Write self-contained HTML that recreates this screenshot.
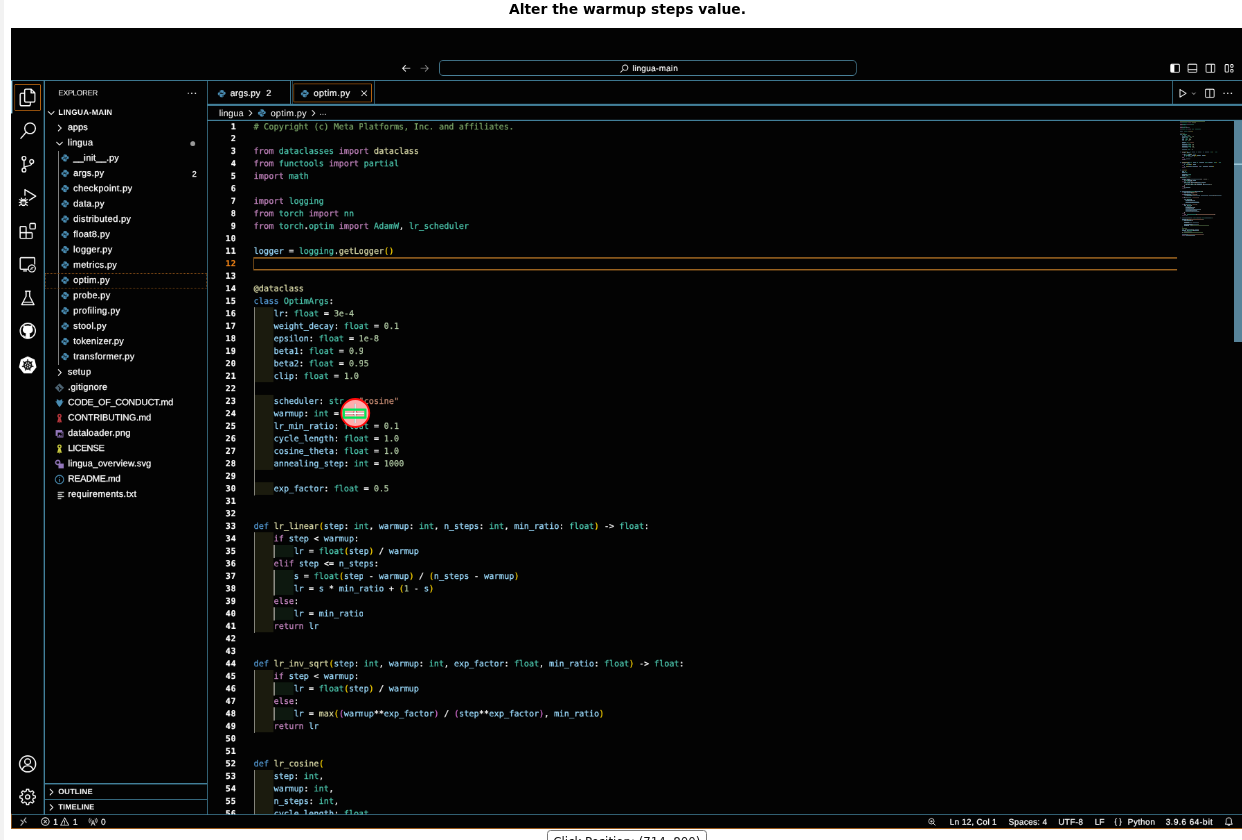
<!DOCTYPE html>
<html lang="en"><head><meta charset="utf-8"><title>optim.py — lingua-main</title>
<style>
html,body{margin:0;padding:0}
body{width:1242px;height:840px;overflow:hidden;background:#fff;position:relative;font-family:"Liberation Sans",sans-serif}
#strip{position:absolute;left:0;top:0;width:4px;height:840px;background:#f2f2f2}
#title{will-change:transform;position:absolute;left:12px;width:1231px;top:1px;text-align:center;font:bold 13.89px "DejaVu Sans",sans-serif;color:#000;line-height:17px;white-space:nowrap}
#clickpos{position:absolute;left:547.400px;top:830.400px;width:159.700px;height:20px;box-sizing:border-box;border:1px solid #7a7a7a;border-radius:3.500px;background:#fff;font:11.800px "DejaVu Sans",sans-serif;color:#111;text-align:center;line-height:22px;white-space:nowrap;will-change:transform}
#vs{position:absolute;left:11px;top:28px;width:1231px;height:801.300px;background:#030303;overflow:hidden}
#u{text-rendering:geometricPrecision;position:absolute;left:0;top:0;width:1778px;height:1158px;transform:scale(.6925,.6946);transform-origin:0 0;color:#fff;font-size:13px;will-change:transform}
#u div,#u span,#u i,#u svg{box-sizing:border-box}
#u i{display:block;position:absolute;font-style:normal}
.abs{position:absolute}
.hl{position:absolute;background:#427f99;height:1px}
.vl{position:absolute;background:#427f99;width:1px}
/* title bar */
#cc{position:absolute;left:618px;top:46.200px;width:603px;height:23px;border:1.200px solid #5493ae;border-radius:6px}
#cctext{position:absolute;left:897.200px;top:48.700px;height:18px;line-height:18px;font-size:12px;white-space:nowrap}
/* activity bar */
.ab-item{position:absolute;left:0;width:48px;height:48px}
.ab-item svg{position:absolute;left:10px;top:10px;color:#fff}
#ab-focus{position:absolute;left:5px;top:81px;width:38px;height:38px;border:1.300px solid #c26a12;border-radius:1px}
#ab-ind{position:absolute;left:0;top:76.300px;width:2.200px;height:47px;background:#a9dcf0}
/* sidebar */
#sbtitle{position:absolute;left:68.300px;top:85px;height:18px;line-height:18px;font-size:11px;white-space:nowrap}
.ph{position:absolute;left:49px;width:234px;height:22px;line-height:22px;font-size:11px;font-weight:bold;white-space:nowrap}
.ph .lbl{position:absolute;left:19.300px;top:.8px}
.row{position:absolute;left:0;width:283px;height:22px;line-height:22px;font-size:13px;white-space:nowrap}
.row .lbl{position:absolute;top:-.9px;-webkit-text-stroke:.3px #fff}
#selbox{position:absolute;left:48.500px;top:352.700px;width:234.500px;height:22px;border:1.100px dotted #8a5018}
.row svg{position:absolute}
.dot{right:17.500px;top:8.500px;width:7px;height:7px;border-radius:50%;background:#9a9a9a}
.bdg{position:absolute;right:15.200px;top:1px;font-size:11.500px;-webkit-text-stroke:.3px #fff}
.tw{color:#fff}
/* editor */
.tab{position:absolute;top:76.700px;height:33px;line-height:34px;font-size:13px;white-space:nowrap}
#bc{position:absolute;left:300.500px;top:111.700px;height:21px;line-height:21px;font-size:13px;white-space:nowrap}
#code{position:absolute;left:284px;top:133.100px;width:1494px;height:999.200px;overflow:hidden;font-family:"DejaVu Sans Mono","Liberation Mono",monospace;font-size:12px}
.ln{position:absolute;left:0;width:41.500px;text-align:right;height:18px;line-height:18px;font-weight:bold;color:#fff;letter-spacing:.7px;-webkit-text-stroke:.2px currentColor}
.ln.cur{color:#f38518}
.cl{position:absolute;left:66.600px;height:18px;line-height:18px;white-space:pre;color:#fff}
.cl .ig{top:0;width:1.300px;height:18.100px;background:#8c8c84}
.cl .rb{top:0;width:28.900px;height:18px}
.cl span,.cl{ -webkit-text-stroke:.25px currentColor}
#curline{position:absolute;left:65.500px;top:196.900px;width:1334px;height:19.200px}
#curline i{background:#9a6320}
#mm{position:absolute;left:1404px;top:.6px;width:66px;height:200px;overflow:hidden;opacity:.5}
#mm i{height:1px}
#sl{position:absolute;left:1765.500px;top:133.400px;width:13px;height:318.500px;background:#58849a}
/* status bar */
#st{position:absolute;left:0;top:1131.200px;width:1778px;height:22px;border-left:1.200px solid #9a5a1c;border-bottom:1.300px solid #a5601e;font-size:12px;line-height:20px;white-space:nowrap}
#st .it{position:absolute;top:1.400px;height:20px}
#st svg{position:absolute;margin-top:1.400px}
/* marker */
#marker{position:absolute;left:335px;top:393px;width:40px;height:40px}

#st .it,.tab span,#cctext{-webkit-text-stroke:.22px #fff}

</style></head>
<body>
<div id="strip"></div>
<div id="title">Alter the warmup steps value.</div>
<div id="vs"><div id="u">

<!-- title bar -->
<div class="hl" style="left:0;top:75.100px;width:1778px;height:1.300px"></div>
<svg viewBox="0 0 16 16" width="16" height="16" style="position:absolute;left:563px;top:50.200px;color:#fff" fill="none" stroke="currentColor"><path d="M13.500 8H3M7 3.500L2.500 8 7 12.500" stroke-width="1.200"/></svg>
<svg viewBox="0 0 16 16" width="16" height="16" style="position:absolute;left:589.300px;top:50.200px;color:#8a8a8a" fill="none" stroke="currentColor"><path d="M2.500 8H13M9 3.500L13.500 8 9 12.500" stroke-width="1.200"/></svg>
<div id="cc"></div>
<svg viewBox="0 0 16 16" width="15" height="15" style="position:absolute;left:878px;top:50.700px;color:#fff" fill="none" stroke="currentColor"><circle cx="9.500" cy="6.500" r="4.200" stroke-width="1.200"/><path d="M6.500 9.500L2 14" stroke-width="1.200"/></svg>
<div id="cctext"><span style="letter-spacing:0.359px;">lingua-main</span></div>
<svg viewBox="0 0 16 16" width="16" height="16" style="position:absolute;left:1672.500px;top:50.100px;color:#fff" fill="none" stroke="currentColor"><rect x="1.700" y="2.200" width="12.600" height="11.600" rx="1.500" stroke-width="1.200"/><path d="M2 2.500h5v11H2z" fill="currentColor" stroke="none"/></svg>
<svg viewBox="0 0 16 16" width="16" height="16" style="position:absolute;left:1698.400px;top:50.100px;color:#fff" fill="none" stroke="currentColor"><rect x="1.700" y="2.200" width="12.600" height="11.600" rx="1.500" stroke-width="1.200"/><path d="M2 9.800h12" stroke-width="1.200"/></svg>
<svg viewBox="0 0 16 16" width="16" height="16" style="position:absolute;left:1724.200px;top:50.100px;color:#fff" fill="none" stroke="currentColor"><rect x="1.700" y="2.200" width="12.600" height="11.600" rx="1.500" stroke-width="1.200"/><path d="M9.300 2.500v11" stroke-width="1.200"/></svg>
<svg viewBox="0 0 16 16" width="16" height="16" style="position:absolute;left:1750.700px;top:50.100px;color:#fff" fill="none" stroke="currentColor"><rect x="2.200" y="2.700" width="5" height="10.600" rx="1" stroke-width="1.200"/><rect x="10.200" y="2.700" width="3.600" height="3.600" rx="1" stroke-width="1.200"/><rect x="10.200" y="9.700" width="3.600" height="3.600" rx="1" stroke-width="1.200"/></svg>

<!-- activity bar -->
<div class="vl" style="left:47.400px;top:75.700px;width:1.300px;height:1056.600px"></div>
<div id="ab-ind"></div><div id="ab-focus"></div>
<div class="ab-item" style="top:75.9px"><svg viewBox="0 0 24 24" width="28" height="28" style="" fill="none" stroke="currentColor"><path d="M10 1.700h6.300l4.700 4.700v9.600a1.700 1.700 0 0 1-1.700 1.700H10a1.700 1.700 0 0 1-1.700-1.700V3.400A1.700 1.700 0 0 1 10 1.700z M16.300 1.700v4.700h4.700 M8.300 6.800H4.500a1.700 1.700 0 0 0-1.700 1.700v12a1.700 1.700 0 0 0 1.700 1.700h9.100a1.700 1.700 0 0 0 1.700-1.700V17.700" stroke-width="1.450" stroke-linejoin="round"/></svg></div>
<div class="ab-item" style="top:123.9px"><svg viewBox="0 0 24 24" width="28" height="28" style="" fill="none" stroke="currentColor"><circle cx="15" cy="8.900" r="6.600" stroke-width="1.450"/><path d="M10.300 13.600L3.100 21.800" stroke-width="1.450"/></svg></div>
<div class="ab-item" style="top:171.9px"><svg viewBox="0 0 24 24" width="28" height="28" style="" fill="none" stroke="currentColor"><circle cx="7.500" cy="4.800" r="2.400" stroke-width="1.400"/><circle cx="7.500" cy="19.200" r="2.400" stroke-width="1.400"/><circle cx="17" cy="8.800" r="2.400" stroke-width="1.400"/><path d="M7.500 7.200v9.600M17 11.200c0 3.700-6 2.600-8.700 4.400" stroke-width="1.400"/></svg></div>
<div class="ab-item" style="top:219.9px"><svg viewBox="0 0 24 24" width="28" height="28" style="" fill="none" stroke="currentColor"><path d="M8.700 9.800V2.300l13.300 8-8.300 5.400" stroke-width="1.450" stroke-linejoin="round"/><ellipse cx="6.800" cy="18" rx="3.100" ry="3.900" stroke-width="1.400" fill="currentColor" fill-opacity=".2"/><path d="M4 16h5.600M1.500 14.300l2.600 1.500M12.100 14.300l-2.600 1.500M1.500 22l2.700-1.700M12.100 22l-2.700-1.700M1.200 18.300h2.600M12.400 18.300H9.800M4.900 14l-.9-1.600M8.700 14l.9-1.600" stroke-width="1.250"/></svg></div>
<div class="ab-item" style="top:267.9px"><svg viewBox="0 0 24 24" width="28" height="28" style="" fill="none" stroke="currentColor"><path d="M3.500 6.600h5.800a.8.8 0 0 1 .8.800v6.900h6.700a.8.8 0 0 1 .8.800v5.300a.8.8 0 0 1-.8.800H3.500a.8.8 0 0 1-.8-.8V7.400a.8.800 0 0 1 .8-.8z M2.700 14.300h7.400v6.900" stroke-width="1.400" stroke-linejoin="round"/><rect x="14.800" y="2.900" width="6.700" height="6.700" rx="1" stroke-width="1.400"/></svg></div>
<div class="ab-item" style="top:315.9px"><svg viewBox="0 0 24 24" width="28" height="28" style="" fill="none" stroke="currentColor"><path d="M12.500 18.200H3.800a1 1 0 0 1-1-1V5a1 1 0 0 1 1-1h16a1 1 0 0 1 1 1v7.500 M6.300 20.300h4.800" stroke-width="1.450" stroke-linejoin="round"/><circle cx="17.200" cy="17.200" r="4.400" stroke-width="1.250" fill="#030303"/><path d="M15.200 18.700l1.600-1.600M16.800 15.700l1 1M19.200 15.600l-1.600 1.600M17.600 18.600l-1-1" stroke-width=".9"/></svg></div>
<div class="ab-item" style="top:363.9px"><svg viewBox="0 0 24 24" width="28" height="28" style="" fill="none" stroke="currentColor"><path d="M8.700 4.200h7.100M10.100 4.200v6.200L4.600 20.900h15.300L14.500 10.400V4.200M6.600 17.800h11.400" stroke-width="1.400" stroke-linejoin="round"/></svg></div>
<div class="ab-item" style="top:411.9px"><svg viewBox="0 0 24 24" width="28" height="28" style="" fill="none" stroke="currentColor"><circle cx="12.200" cy="12" r="9.400" stroke-width="1.450"/><g transform="translate(12.200 12.500) scale(1.220) translate(-12 -12)"><path fill="currentColor" stroke="none" d="M12 6.300c-.8 0-1.600.1-2.300.4-1.400-.9-2-.7-2-.7-.4 1-.15 1.800-.05 2-.5.600-.8 1.300-.8 2.200 0 3 1.800 3.700 3.600 3.900-.3.250-.5.650-.5 1.250v3.400h4.100v-3.400c0-.6-.2-1-.5-1.250 1.800-.2 3.600-.9 3.600-3.900 0-.9-.3-1.600-.8-2.200.1-.2.350-1-.05-2 0 0-.6-.2-2 .7-.7-.3-1.500-.4-2.300-.4z"/><path d="M9.800 17.300c-1.600.5-2.100-.7-2.600-1.200" stroke-width=".9"/></g></svg></div>
<div class="ab-item" style="top:459.9px"><svg viewBox="0 0 24 24" width="28" height="28" style="" fill="none" stroke="currentColor"><path fill="currentColor" stroke="currentColor" stroke-width="1.200" stroke-linejoin="round" d="M12.10 2.90 L20.23 6.82 L22.24 15.61 L16.61 22.67 L7.59 22.67 L1.96 15.61 L3.97 6.82Z"/><g stroke="#111" fill="none"><circle cx="12.1" cy="13.3" r="4.600" stroke-width="1.700"/><circle cx="12.1" cy="13.3" r="1.500" stroke-width="1.100"/><path d="M12.10 11.50L12.10 6.00M13.51 12.18L17.81 8.75M13.85 13.70L19.22 14.92M12.88 14.92L15.27 19.88M11.32 14.92L8.93 19.88M10.35 13.70L4.98 14.92M10.69 12.18L6.39 8.75" stroke-width="1.300"/></g></svg></div>
<div class="ab-item" style="top:1035.5px"><svg viewBox="0 0 24 24" width="28" height="28" style="" fill="none" stroke="currentColor"><circle cx="12" cy="11.500" r="9.900" stroke-width="1.500"/><circle cx="12" cy="8.800" r="3.600" stroke-width="1.500"/><path d="M5.300 18.800c1-3.300 3.700-4.900 6.700-4.900s5.700 1.600 6.700 4.900" stroke-width="1.500"/></svg></div>
<div class="ab-item" style="top:1082.7px"><svg viewBox="0 0 24 24" width="28" height="28" style="" fill="none" stroke="currentColor"><path d="M10.22 5.02 L10.66 2.49 L13.34 2.49 L13.78 5.02 L15.67 5.81 L17.77 4.33 L19.67 6.23 L18.19 8.33 L18.98 10.22 L21.51 10.66 L21.51 13.34 L18.98 13.78 L18.19 15.67 L19.67 17.77 L17.77 19.67 L15.67 18.19 L13.78 18.98 L13.34 21.51 L10.66 21.51 L10.22 18.98 L8.33 18.19 L6.23 19.67 L4.33 17.77 L5.81 15.67 L5.02 13.78 L2.49 13.34 L2.49 10.66 L5.02 10.22 L5.81 8.33 L4.33 6.23 L6.23 4.33 L8.33 5.81Z" stroke-width="1.400" stroke-linejoin="round"/><circle cx="12" cy="12" r="2.600" stroke-width="1.400"/></svg></div>

<!-- sidebar -->
<div id="sb">
<div class="vl" style="left:282.700px;top:75.700px;width:1.300px;height:1056.600px"></div>
<div id="sbtitle"><span style="letter-spacing:-0.396px;">EXPLORER</span></div>
<svg class="abs" viewBox="0 0 16 4" width="16" height="4" style="left:252.600px;top:92px" fill="#fff"><circle cx="2.700" cy="2" r="1.050"/><circle cx="8" cy="2" r="1.050"/><circle cx="13.300" cy="2" r="1.050"/></svg>
<div class="ph" style="top:110.700px"><svg class="tw" viewBox="0 0 16 16" width="16" height="16" style="position:absolute;left:0.500px;top:3px" fill="none" stroke="currentColor"><path d="M3.500 6l4.500 4.500L12.500 6" stroke-width="1.200"/></svg><span class="lbl"><span style="letter-spacing:0.380px;">LINGUA-MAIN</span></span></div>
<div class="vl" style="left:68px;top:176.700px;width:1.200px;height:308px;background:#8a8a8a"></div>
<div id="selbox"></div>
<div class="row" style="top:132.7px"><svg class="tw" viewBox="0 0 16 16" width="16" height="16" style="position:absolute;left:62px;top:3px" fill="none" stroke="currentColor"><path d="M6 3.500l4.500 4.500L6 12.500" stroke-width="1.200"/></svg><span class="lbl" style="left:82px"><span style="letter-spacing:0.211px;">apps</span></span></div>
<div class="row" style="top:154.7px"><svg class="tw" viewBox="0 0 16 16" width="16" height="16" style="position:absolute;left:62px;top:3px" fill="none" stroke="currentColor"><path d="M3.500 6l4.500 4.500L12.500 6" stroke-width="1.200"/></svg><span class="lbl" style="left:82px"><span style="letter-spacing:0.285px;">lingua</span></span><i class="dot"></i></div>
<div class="row" style="top:176.7px"><svg class="fi" viewBox="0 0 16 16" width="12.2" height="12.2" style="position:absolute;left:71.600px;top:4.100px"><path fill="#4a8db3" stroke="none" d="M7.8 1.2c-2.2 0-3.3.9-3.3 2.3v1.7h3.6v.7H3.1C1.600 5.9.9 7 .9 8.500c0 1.700.8 2.800 2.200 2.800h1.300V9.500c0-1.300 1.100-2.300 2.400-2.300h3.000c1.100 0 1.900-.9 1.900-2V3.500c0-1.300-1.300-2.300-3.900-2.300zM6 2.600a.7.7 0 110 1.400.7.7 0 010-1.400z"/><path fill="#4a8db3" stroke="none" d="M8.200 14.800c2.200 0 3.300-.9 3.300-2.300v-1.700H7.900v-.7h5c1.500 0 2.200-1.100 2.200-2.600 0-1.700-.8-2.800-2.200-2.800h-1.300v1.800c0 1.300-1.100 2.300-2.400 2.300h-3c-1.100 0-1.900.9-1.900 2v1.700c0 1.300 1.300 2.300 3.900 2.300zM10 13.400a.7.7 0 110-1.400.7.7 0 010 1.400z"/></svg><span class="lbl" style="left:90px"><span style="letter-spacing:0.279px;">__init__.py</span></span></div>
<div class="row" style="top:198.7px"><svg class="fi" viewBox="0 0 16 16" width="12.2" height="12.2" style="position:absolute;left:71.600px;top:4.100px"><path fill="#4a8db3" stroke="none" d="M7.8 1.2c-2.2 0-3.3.9-3.3 2.3v1.7h3.6v.7H3.1C1.600 5.9.9 7 .9 8.500c0 1.700.8 2.800 2.200 2.800h1.300V9.500c0-1.300 1.100-2.300 2.400-2.300h3.000c1.100 0 1.900-.9 1.900-2V3.500c0-1.300-1.300-2.300-3.900-2.300zM6 2.600a.7.7 0 110 1.400.7.7 0 010-1.400z"/><path fill="#4a8db3" stroke="none" d="M8.200 14.800c2.200 0 3.300-.9 3.300-2.300v-1.700H7.900v-.7h5c1.500 0 2.200-1.100 2.200-2.600 0-1.700-.8-2.800-2.200-2.800h-1.300v1.800c0 1.300-1.100 2.300-2.400 2.300h-3c-1.100 0-1.900.9-1.900 2v1.700c0 1.300 1.300 2.300 3.900 2.300zM10 13.400a.7.7 0 110-1.400.7.7 0 010 1.400z"/></svg><span class="lbl" style="left:90px"><span style="letter-spacing:0.278px;">args.py</span></span><span class="bdg">2</span></div>
<div class="row" style="top:220.7px"><svg class="fi" viewBox="0 0 16 16" width="12.2" height="12.2" style="position:absolute;left:71.600px;top:4.100px"><path fill="#4a8db3" stroke="none" d="M7.8 1.2c-2.2 0-3.3.9-3.3 2.3v1.7h3.6v.7H3.1C1.600 5.9.9 7 .9 8.500c0 1.700.8 2.800 2.200 2.800h1.300V9.500c0-1.300 1.100-2.300 2.400-2.300h3.000c1.100 0 1.900-.9 1.900-2V3.500c0-1.300-1.300-2.300-3.900-2.300zM6 2.600a.7.7 0 110 1.400.7.7 0 010-1.400z"/><path fill="#4a8db3" stroke="none" d="M8.200 14.800c2.200 0 3.300-.9 3.300-2.300v-1.700H7.900v-.7h5c1.500 0 2.200-1.100 2.200-2.600 0-1.700-.8-2.800-2.200-2.800h-1.300v1.800c0 1.300-1.100 2.300-2.400 2.300h-3c-1.100 0-1.900.9-1.900 2v1.700c0 1.300 1.300 2.300 3.900 2.300zM10 13.400a.7.7 0 110-1.400.7.7 0 010 1.400z"/></svg><span class="lbl" style="left:90px"><span style="letter-spacing:0.469px;">checkpoint.py</span></span></div>
<div class="row" style="top:242.7px"><svg class="fi" viewBox="0 0 16 16" width="12.2" height="12.2" style="position:absolute;left:71.600px;top:4.100px"><path fill="#4a8db3" stroke="none" d="M7.8 1.2c-2.2 0-3.3.9-3.3 2.3v1.7h3.6v.7H3.1C1.600 5.9.9 7 .9 8.500c0 1.700.8 2.800 2.200 2.800h1.300V9.500c0-1.300 1.100-2.300 2.400-2.300h3.000c1.100 0 1.900-.9 1.900-2V3.500c0-1.300-1.300-2.300-3.900-2.300zM6 2.600a.7.7 0 110 1.400.7.7 0 010-1.400z"/><path fill="#4a8db3" stroke="none" d="M8.200 14.800c2.200 0 3.300-.9 3.300-2.300v-1.700H7.900v-.7h5c1.500 0 2.200-1.100 2.200-2.600 0-1.700-.8-2.800-2.200-2.800h-1.300v1.800c0 1.300-1.100 2.300-2.400 2.300h-3c-1.100 0-1.900.9-1.900 2v1.700c0 1.300 1.300 2.300 3.900 2.300zM10 13.400a.7.7 0 110-1.400.7.7 0 010 1.400z"/></svg><span class="lbl" style="left:90px"><span style="letter-spacing:0.337px;">data.py</span></span></div>
<div class="row" style="top:264.7px"><svg class="fi" viewBox="0 0 16 16" width="12.2" height="12.2" style="position:absolute;left:71.600px;top:4.100px"><path fill="#4a8db3" stroke="none" d="M7.8 1.2c-2.2 0-3.3.9-3.3 2.3v1.7h3.6v.7H3.1C1.600 5.9.9 7 .9 8.500c0 1.700.8 2.800 2.200 2.800h1.300V9.500c0-1.300 1.100-2.300 2.400-2.300h3.000c1.100 0 1.900-.9 1.900-2V3.500c0-1.300-1.300-2.300-3.900-2.300zM6 2.600a.7.7 0 110 1.400.7.7 0 010-1.400z"/><path fill="#4a8db3" stroke="none" d="M8.200 14.800c2.200 0 3.300-.9 3.300-2.300v-1.700H7.900v-.7h5c1.500 0 2.200-1.100 2.200-2.600 0-1.700-.8-2.800-2.200-2.800h-1.300v1.800c0 1.300-1.100 2.300-2.400 2.300h-3c-1.100 0-1.900.9-1.900 2v1.700c0 1.300 1.300 2.300 3.900 2.300zM10 13.400a.7.7 0 110-1.400.7.7 0 010 1.400z"/></svg><span class="lbl" style="left:90px"><span style="letter-spacing:0.446px;">distributed.py</span></span></div>
<div class="row" style="top:286.7px"><svg class="fi" viewBox="0 0 16 16" width="12.2" height="12.2" style="position:absolute;left:71.600px;top:4.100px"><path fill="#4a8db3" stroke="none" d="M7.8 1.2c-2.2 0-3.3.9-3.3 2.3v1.7h3.6v.7H3.1C1.600 5.9.9 7 .9 8.500c0 1.700.8 2.800 2.200 2.800h1.300V9.500c0-1.300 1.100-2.300 2.400-2.300h3.000c1.100 0 1.900-.9 1.900-2V3.500c0-1.300-1.300-2.300-3.900-2.300zM6 2.600a.7.7 0 110 1.400.7.7 0 010-1.400z"/><path fill="#4a8db3" stroke="none" d="M8.200 14.800c2.200 0 3.300-.9 3.300-2.300v-1.700H7.900v-.7h5c1.500 0 2.200-1.100 2.200-2.600 0-1.700-.8-2.800-2.200-2.800h-1.300v1.800c0 1.300-1.100 2.300-2.400 2.300h-3c-1.100 0-1.900.9-1.900 2v1.700c0 1.300 1.300 2.300 3.900 2.300zM10 13.400a.7.7 0 110-1.400.7.7 0 010 1.400z"/></svg><span class="lbl" style="left:90px"><span style="letter-spacing:0.455px;">float8.py</span></span></div>
<div class="row" style="top:308.7px"><svg class="fi" viewBox="0 0 16 16" width="12.2" height="12.2" style="position:absolute;left:71.600px;top:4.100px"><path fill="#4a8db3" stroke="none" d="M7.8 1.2c-2.2 0-3.3.9-3.3 2.3v1.7h3.6v.7H3.1C1.600 5.9.9 7 .9 8.500c0 1.700.8 2.800 2.200 2.800h1.300V9.500c0-1.300 1.100-2.300 2.400-2.300h3.000c1.100 0 1.900-.9 1.900-2V3.500c0-1.300-1.300-2.300-3.900-2.300zM6 2.600a.7.7 0 110 1.400.7.7 0 010-1.400z"/><path fill="#4a8db3" stroke="none" d="M8.200 14.800c2.200 0 3.300-.9 3.300-2.300v-1.700H7.900v-.7h5c1.500 0 2.200-1.100 2.200-2.600 0-1.700-.8-2.800-2.200-2.800h-1.300v1.800c0 1.300-1.100 2.300-2.400 2.300h-3c-1.100 0-1.900.9-1.900 2v1.700c0 1.300 1.300 2.300 3.900 2.300zM10 13.400a.7.7 0 110-1.400.7.7 0 010 1.400z"/></svg><span class="lbl" style="left:90px"><span style="letter-spacing:0.439px;">logger.py</span></span></div>
<div class="row" style="top:330.7px"><svg class="fi" viewBox="0 0 16 16" width="12.2" height="12.2" style="position:absolute;left:71.600px;top:4.100px"><path fill="#4a8db3" stroke="none" d="M7.8 1.2c-2.2 0-3.3.9-3.3 2.3v1.7h3.6v.7H3.1C1.600 5.9.9 7 .9 8.500c0 1.700.8 2.800 2.200 2.800h1.300V9.500c0-1.300 1.100-2.300 2.400-2.300h3.000c1.100 0 1.900-.9 1.900-2V3.500c0-1.300-1.300-2.300-3.900-2.300zM6 2.600a.7.7 0 110 1.400.7.7 0 010-1.400z"/><path fill="#4a8db3" stroke="none" d="M8.200 14.800c2.200 0 3.300-.9 3.300-2.300v-1.700H7.900v-.7h5c1.500 0 2.200-1.100 2.200-2.600 0-1.700-.8-2.800-2.200-2.800h-1.300v1.800c0 1.300-1.100 2.300-2.400 2.300h-3c-1.100 0-1.900.9-1.900 2v1.700c0 1.300 1.300 2.300 3.900 2.300zM10 13.400a.7.7 0 110-1.400.7.7 0 010 1.400z"/></svg><span class="lbl" style="left:90px"><span style="letter-spacing:0.398px;">metrics.py</span></span></div>
<div class="row sel" style="top:352.7px"><svg class="fi" viewBox="0 0 16 16" width="12.2" height="12.2" style="position:absolute;left:71.600px;top:4.100px"><path fill="#4a8db3" stroke="none" d="M7.8 1.2c-2.2 0-3.3.9-3.3 2.3v1.7h3.6v.7H3.1C1.600 5.9.9 7 .9 8.500c0 1.700.8 2.800 2.200 2.800h1.300V9.500c0-1.300 1.100-2.300 2.400-2.300h3.000c1.100 0 1.900-.9 1.900-2V3.500c0-1.300-1.300-2.300-3.900-2.300zM6 2.600a.7.7 0 110 1.400.7.7 0 010-1.400z"/><path fill="#4a8db3" stroke="none" d="M8.200 14.800c2.200 0 3.300-.9 3.300-2.300v-1.700H7.900v-.7h5c1.500 0 2.200-1.100 2.200-2.600 0-1.700-.8-2.800-2.200-2.800h-1.300v1.800c0 1.300-1.100 2.300-2.400 2.300h-3c-1.100 0-1.900.9-1.900 2v1.700c0 1.300 1.300 2.300 3.900 2.300zM10 13.400a.7.7 0 110-1.400.7.7 0 010 1.400z"/></svg><span class="lbl" style="left:90px"><span style="letter-spacing:0.477px;">optim.py</span></span></div>
<div class="row" style="top:374.7px"><svg class="fi" viewBox="0 0 16 16" width="12.2" height="12.2" style="position:absolute;left:71.600px;top:4.100px"><path fill="#4a8db3" stroke="none" d="M7.8 1.2c-2.2 0-3.3.9-3.3 2.3v1.7h3.6v.7H3.1C1.600 5.9.9 7 .9 8.500c0 1.700.8 2.800 2.200 2.800h1.300V9.500c0-1.300 1.100-2.300 2.400-2.300h3.000c1.100 0 1.900-.9 1.900-2V3.500c0-1.300-1.300-2.300-3.900-2.300zM6 2.600a.7.7 0 110 1.400.7.7 0 010-1.400z"/><path fill="#4a8db3" stroke="none" d="M8.200 14.800c2.200 0 3.300-.9 3.300-2.300v-1.700H7.900v-.7h5c1.500 0 2.200-1.100 2.200-2.600 0-1.700-.8-2.800-2.200-2.800h-1.300v1.800c0 1.300-1.100 2.300-2.400 2.300h-3c-1.100 0-1.900.9-1.900 2v1.700c0 1.300 1.300 2.300 3.900 2.300zM10 13.400a.7.7 0 110-1.400.7.7 0 010 1.400z"/></svg><span class="lbl" style="left:90px"><span style="letter-spacing:0.368px;">probe.py</span></span></div>
<div class="row" style="top:396.7px"><svg class="fi" viewBox="0 0 16 16" width="12.2" height="12.2" style="position:absolute;left:71.600px;top:4.100px"><path fill="#4a8db3" stroke="none" d="M7.8 1.2c-2.2 0-3.3.9-3.3 2.3v1.7h3.6v.7H3.1C1.600 5.9.9 7 .9 8.500c0 1.700.8 2.800 2.200 2.800h1.300V9.500c0-1.300 1.100-2.300 2.400-2.300h3.000c1.100 0 1.900-.9 1.900-2V3.500c0-1.300-1.300-2.300-3.900-2.300zM6 2.600a.7.7 0 110 1.400.7.7 0 010-1.400z"/><path fill="#4a8db3" stroke="none" d="M8.200 14.800c2.200 0 3.300-.9 3.300-2.300v-1.700H7.900v-.7h5c1.500 0 2.200-1.100 2.200-2.600 0-1.700-.8-2.800-2.200-2.800h-1.300v1.800c0 1.300-1.100 2.300-2.400 2.300h-3c-1.100 0-1.900.9-1.900 2v1.700c0 1.300 1.300 2.300 3.900 2.300zM10 13.400a.7.7 0 110-1.400.7.7 0 010 1.400z"/></svg><span class="lbl" style="left:90px"><span style="letter-spacing:0.413px;">profiling.py</span></span></div>
<div class="row" style="top:418.7px"><svg class="fi" viewBox="0 0 16 16" width="12.2" height="12.2" style="position:absolute;left:71.600px;top:4.100px"><path fill="#4a8db3" stroke="none" d="M7.8 1.2c-2.2 0-3.3.9-3.3 2.3v1.7h3.6v.7H3.1C1.600 5.9.9 7 .9 8.500c0 1.700.8 2.800 2.200 2.800h1.300V9.500c0-1.300 1.100-2.300 2.400-2.300h3.000c1.100 0 1.900-.9 1.900-2V3.500c0-1.300-1.300-2.300-3.900-2.300zM6 2.600a.7.7 0 110 1.400.7.7 0 010-1.400z"/><path fill="#4a8db3" stroke="none" d="M8.200 14.800c2.200 0 3.300-.9 3.300-2.300v-1.700H7.900v-.7h5c1.500 0 2.200-1.100 2.200-2.600 0-1.700-.8-2.800-2.200-2.800h-1.300v1.800c0 1.300-1.100 2.300-2.400 2.300h-3c-1.100 0-1.900.9-1.900 2v1.700c0 1.300 1.300 2.300 3.900 2.300zM10 13.400a.7.7 0 110-1.400.7.7 0 010 1.400z"/></svg><span class="lbl" style="left:90px"><span style="letter-spacing:0.405px;">stool.py</span></span></div>
<div class="row" style="top:440.7px"><svg class="fi" viewBox="0 0 16 16" width="12.2" height="12.2" style="position:absolute;left:71.600px;top:4.100px"><path fill="#4a8db3" stroke="none" d="M7.8 1.2c-2.2 0-3.3.9-3.3 2.3v1.7h3.6v.7H3.1C1.600 5.9.9 7 .9 8.500c0 1.700.8 2.800 2.200 2.800h1.300V9.500c0-1.300 1.100-2.300 2.400-2.300h3.000c1.100 0 1.900-.9 1.900-2V3.500c0-1.300-1.300-2.300-3.900-2.300zM6 2.600a.7.7 0 110 1.400.7.7 0 010-1.400z"/><path fill="#4a8db3" stroke="none" d="M8.200 14.800c2.200 0 3.300-.9 3.300-2.300v-1.700H7.900v-.7h5c1.500 0 2.200-1.100 2.200-2.600 0-1.700-.8-2.800-2.200-2.800h-1.300v1.800c0 1.300-1.100 2.300-2.400 2.300h-3c-1.100 0-1.900.9-1.900 2v1.700c0 1.300 1.300 2.300 3.900 2.300zM10 13.400a.7.7 0 110-1.400.7.7 0 010 1.400z"/></svg><span class="lbl" style="left:90px"><span style="letter-spacing:0.317px;">tokenizer.py</span></span></div>
<div class="row" style="top:462.7px"><svg class="fi" viewBox="0 0 16 16" width="12.2" height="12.2" style="position:absolute;left:71.600px;top:4.100px"><path fill="#4a8db3" stroke="none" d="M7.8 1.2c-2.2 0-3.3.9-3.3 2.3v1.7h3.6v.7H3.1C1.600 5.9.9 7 .9 8.500c0 1.700.8 2.800 2.200 2.800h1.300V9.500c0-1.300 1.100-2.300 2.400-2.300h3.000c1.100 0 1.900-.9 1.900-2V3.500c0-1.300-1.300-2.300-3.900-2.300zM6 2.600a.7.7 0 110 1.400.7.7 0 010-1.400z"/><path fill="#4a8db3" stroke="none" d="M8.200 14.800c2.200 0 3.300-.9 3.300-2.300v-1.700H7.900v-.7h5c1.500 0 2.200-1.100 2.200-2.600 0-1.700-.8-2.800-2.200-2.800h-1.300v1.800c0 1.300-1.100 2.300-2.400 2.300h-3c-1.100 0-1.900.9-1.900 2v1.700c0 1.300 1.300 2.300 3.900 2.300zM10 13.400a.7.7 0 110-1.400.7.7 0 010 1.400z"/></svg><span class="lbl" style="left:90px"><span style="letter-spacing:0.395px;">transformer.py</span></span></div>
<div class="row" style="top:484.7px"><svg class="tw" viewBox="0 0 16 16" width="16" height="16" style="position:absolute;left:62px;top:3px" fill="none" stroke="currentColor"><path d="M6 3.500l4.500 4.500L6 12.500" stroke-width="1.200"/></svg><span class="lbl" style="left:82px"><span style="letter-spacing:0.414px;">setup</span></span></div>
<div class="row" style="top:506.7px"><svg class="fi" style="position:absolute;left:62px;top:2.900px" viewBox="0 0 16 16" width="16" height="16"><path fill="#4f6675" d="M8 1.500L14.500 8 8 14.500 1.500 8z"/><path stroke="#000" stroke-width="1.100" fill="none" d="M6 5.500l4 4M8 7.500v3.500"/><circle cx="10" cy="9.500" r="1" fill="#000"/><circle cx="8" cy="11" r="1" fill="#000"/></svg><span class="lbl" style="left:82.3px"><span style="letter-spacing:0.357px;">.gitignore</span></span></div>
<div class="row" style="top:528.7px"><svg class="fi" style="position:absolute;left:62px;top:2.900px" viewBox="0 0 16 16" width="16" height="16"><path fill="#4a8db3" d="M4 2l4 2.500L12 2v6.500L8 14 4 8.500zM1.500 6L4 8.500M14.500 6L12 8.500"/><path fill="#4a8db3" d="M2 5.500l2.500 3v-3zM14 5.500l-2.500 3v-3z"/></svg><span class="lbl" style="left:82.3px"><span style="letter-spacing:-0.203px;">CODE_OF_CONDUCT.md</span></span></div>
<div class="row" style="top:550.7px"><svg class="fi" style="position:absolute;left:62px;top:2.900px" viewBox="0 0 16 16" width="16" height="16"><path fill="#b8383e" d="M8 1.500a3 3 0 013 3c0 1.300-.7 2.300-1.500 2.800l2 6.700-2-.8-1 1.800-.5-4.500-.5 4.500-1-1.800-2 .8 2-6.700C5.700 6.800 5 5.800 5 4.500a3 3 0 013-3z"/><circle cx="8" cy="4.500" r="1.200" fill="#000"/></svg><span class="lbl" style="left:82.3px"><span style="letter-spacing:-0.051px;">CONTRIBUTING.md</span></span></div>
<div class="row" style="top:572.7px"><svg class="fi" style="position:absolute;left:62px;top:2.900px" viewBox="0 0 16 16" width="16" height="16"><path fill="#9478bc" d="M2.500 3h9.500v2h1.500v8.500H4.500V11H2.500z"/><path fill="#000" d="M5.500 6.500h7v6h-7z"/><path fill="#9478bc" d="M6 12l2-3 1.500 2 1-1 1.500 2z"/><circle cx="10.800" cy="8" r=".8" fill="#9478bc"/></svg><span class="lbl" style="left:82.3px"><span style="letter-spacing:0.323px;">dataloader.png</span></span></div>
<div class="row" style="top:594.7px"><svg class="fi" style="position:absolute;left:62px;top:2.900px" viewBox="0 0 16 16" width="16" height="16"><path fill="#cbcb41" d="M8 1.500a3 3 0 013 3c0 1.300-.7 2.300-1.500 2.800l2 6.700-2-.8-1 1.800-.5-4.500-.5 4.500-1-1.800-2 .8 2-6.700C5.700 6.800 5 5.800 5 4.500a3 3 0 013-3z"/><circle cx="8" cy="4.500" r="1.200" fill="#000"/></svg><span class="lbl" style="left:82.3px"><span style="letter-spacing:-0.459px;">LICENSE</span></span></div>
<div class="row" style="top:616.7px"><svg class="fi" style="position:absolute;left:62px;top:2.900px" viewBox="0 0 16 16" width="16" height="16"><circle cx="5.500" cy="5.500" r="3" fill="none" stroke="#9478bc" stroke-width="1.800"/><rect x="6.500" y="7" width="7.500" height="7" fill="#9478bc"/></svg><span class="lbl" style="left:82.3px"><span style="letter-spacing:0.204px;">lingua_overview.svg</span></span></div>
<div class="row" style="top:638.7px"><svg class="fi" style="position:absolute;left:62px;top:2.900px" viewBox="0 0 16 16" width="16" height="16"><circle cx="8" cy="8" r="6" fill="none" stroke="#4a8db3" stroke-width="1.300"/><path stroke="#4a8db3" stroke-width="1.500" d="M8 7v4.500M8 4.300v1.500"/></svg><span class="lbl" style="left:82.3px"><span style="letter-spacing:-0.212px;">README.md</span></span></div>
<div class="row" style="top:660.7px"><svg class="fi" style="position:absolute;left:63.5px;top:2.900px" viewBox="0 0 16 16" width="16" height="16"><path stroke="#c5c8c6" stroke-width="1.400" d="M3.500 4.500h9M3.500 7.500h6M3.500 10.500h9M3.500 13.500h5"/></svg><span class="lbl" style="left:82.3px"><span style="letter-spacing:0.367px;">requirements.txt</span></span></div>
<div class="hl" style="left:49px;top:1087.200px;width:234px;height:1.600px"></div>
<div class="ph" style="top:1088.600px"><svg class="tw" viewBox="0 0 16 16" width="16" height="16" style="position:absolute;left:0.500px;top:3px" fill="none" stroke="currentColor"><path d="M6 3.500l4.500 4.500L6 12.500" stroke-width="1.200"/></svg><span class="lbl"><span style="letter-spacing:0.199px;">OUTLINE</span></span></div>
<div class="hl" style="left:49px;top:1109.600px;width:234px;height:1.300px"></div>
<div class="ph" style="top:1110.600px"><svg class="tw" viewBox="0 0 16 16" width="16" height="16" style="position:absolute;left:0.500px;top:3px" fill="none" stroke="currentColor"><path d="M6 3.500l4.500 4.500L6 12.500" stroke-width="1.200"/></svg><span class="lbl"><span style="letter-spacing:0.098px;">TIMELINE</span></span></div>
</div>

<!-- editor tabs -->
<div class="hl" style="left:284px;top:109.300px;width:1494px;height:2.600px"></div>
<div class="vl" style="left:402.500px;top:75.700px;width:1.300px;height:34px"></div>
<div class="vl" style="left:405.500px;top:75.700px;width:1.300px;height:34px;opacity:.55"></div>
<div class="vl" style="left:524px;top:75.700px;width:1.300px;height:34px"></div>
<div class="vl" style="left:1676.500px;top:75.700px;width:1.300px;height:34px"></div>
<div class="abs" style="left:408.400px;top:79.600px;width:113px;height:27.900px;border:1.300px solid #c26a12;border-radius:1px"></div>
<div class="tab" style="left:296px"><svg class="fi" viewBox="0 0 16 16" width="12.5" height="12.5" style="position:absolute;left:1.800px;top:11px"><path fill="#4a8db3" stroke="none" d="M7.8 1.2c-2.2 0-3.3.9-3.3 2.3v1.7h3.6v.7H3.1C1.600 5.9.9 7 .9 8.500c0 1.700.8 2.800 2.200 2.800h1.300V9.500c0-1.300 1.100-2.300 2.400-2.300h3.000c1.100 0 1.900-.9 1.900-2V3.500c0-1.300-1.300-2.300-3.900-2.300zM6 2.600a.7.7 0 110 1.400.7.7 0 010-1.400z"/><path fill="#4a8db3" stroke="none" d="M8.200 14.800c2.200 0 3.300-.9 3.300-2.300v-1.700H7.900v-.7h5c1.500 0 2.200-1.100 2.200-2.600 0-1.700-.8-2.800-2.200-2.800h-1.300v1.800c0 1.300-1.100 2.300-2.400 2.300h-3c-1.100 0-1.900.9-1.900 2v1.700c0 1.300 1.300 2.300 3.900 2.300zM10 13.400a.7.7 0 110-1.400.7.7 0 010 1.400z"/></svg><span class="abs" style="left:20.400px"><span style="letter-spacing:0.159px;">args.py</span></span><span class="abs" style="left:72.500px">2</span></div>
<div class="tab" style="left:416.500px"><svg class="fi" viewBox="0 0 16 16" width="12.5" height="12.5" style="position:absolute;left:1.800px;top:11px"><path fill="#4a8db3" stroke="none" d="M7.8 1.2c-2.2 0-3.3.9-3.3 2.3v1.7h3.6v.7H3.1C1.600 5.9.9 7 .9 8.500c0 1.700.8 2.800 2.200 2.800h1.300V9.500c0-1.300 1.100-2.300 2.400-2.300h3.000c1.100 0 1.900-.9 1.900-2V3.500c0-1.300-1.300-2.300-3.900-2.300zM6 2.600a.7.7 0 110 1.400.7.7 0 010-1.400z"/><path fill="#4a8db3" stroke="none" d="M8.200 14.800c2.200 0 3.300-.9 3.300-2.300v-1.700H7.900v-.7h5c1.500 0 2.200-1.100 2.200-2.600 0-1.700-.8-2.800-2.200-2.800h-1.300v1.800c0 1.300-1.100 2.300-2.400 2.300h-3c-1.100 0-1.900.9-1.900 2v1.700c0 1.300 1.300 2.300 3.900 2.300zM10 13.400a.7.7 0 110-1.400.7.7 0 010 1.400z"/></svg><span class="abs" style="left:20.500px"><span style="letter-spacing:0.464px;">optim.py</span></span>
<svg viewBox="0 0 16 16" width="14" height="14" style="position:absolute;left:86.500px;top:10.500px;color:#fff" fill="none" stroke="currentColor"><path d="M3.500 3.500l9 9M12.500 3.500l-9 9" stroke-width="1.200"/></svg></div>
<svg viewBox="0 0 16 16" width="16" height="16" style="position:absolute;left:1683.500px;top:86px;color:#fff" fill="none" stroke="currentColor"><path d="M4 2.500v11l9-5.500z" stroke-width="1.200" stroke-linejoin="round"/></svg>
<svg viewBox="0 0 16 16" width="12" height="12" style="position:absolute;left:1702px;top:88px;color:#fff" fill="none" stroke="currentColor"><path d="M4.500 6.500L8 10l3.500-3.500" stroke-width="1.200"/></svg>
<svg viewBox="0 0 16 16" width="16" height="16" style="position:absolute;left:1723.400px;top:86px;color:#fff" fill="none" stroke="currentColor"><rect x="1.700" y="2.200" width="12.600" height="11.600" rx="1.500" stroke-width="1.200"/><path d="M8 2.500v11" stroke-width="1.200"/></svg>
<svg class="abs" viewBox="0 0 16 4" width="16" height="4" style="left:1749px;top:92px" fill="#fff"><circle cx="2.700" cy="2" r="1.050"/><circle cx="8" cy="2" r="1.050"/><circle cx="13.300" cy="2" r="1.050"/></svg>

<!-- breadcrumbs -->
<div class="hl" style="left:284px;top:132.450px;width:1494px;height:1.300px"></div>
<div id="bc"><span style="letter-spacing:0.113px;">lingua</span><svg class="tw" viewBox="0 0 16 16" width="15" height="15" style="position:absolute;left:37px;top:3.500px" fill="none" stroke="currentColor"><path d="M6 3.500l4.500 4.500L6 12.500" stroke-width="1.200"/></svg><svg class="fi" viewBox="0 0 16 16" width="12.5" height="12.5" style="position:absolute;left:55.750px;top:4.500px"><path fill="#4a8db3" stroke="none" d="M7.8 1.2c-2.2 0-3.3.9-3.3 2.3v1.7h3.6v.7H3.1C1.600 5.9.9 7 .9 8.500c0 1.700.8 2.800 2.200 2.800h1.300V9.500c0-1.300 1.100-2.300 2.400-2.300h3.000c1.100 0 1.900-.9 1.900-2V3.500c0-1.300-1.300-2.300-3.900-2.300zM6 2.600a.7.7 0 110 1.400.7.7 0 010-1.400z"/><path fill="#4a8db3" stroke="none" d="M8.200 14.800c2.200 0 3.300-.9 3.300-2.300v-1.700H7.900v-.7h5c1.500 0 2.200-1.100 2.200-2.600 0-1.700-.8-2.800-2.200-2.800h-1.300v1.800c0 1.300-1.100 2.300-2.400 2.300h-3c-1.100 0-1.900.9-1.900 2v1.700c0 1.300 1.300 2.300 3.900 2.300zM10 13.400a.7.7 0 110-1.400.7.7 0 010 1.400z"/></svg><span class="abs" style="left:74.500px"><span style="letter-spacing:0.392px;">optim.py</span></span><svg class="tw" viewBox="0 0 16 16" width="15" height="15" style="position:absolute;left:128px;top:3.500px" fill="none" stroke="currentColor"><path d="M6 3.500l4.500 4.500L6 12.500" stroke-width="1.200"/></svg><span class="abs" style="left:144.600px;font-size:11px;letter-spacing:-.5px">…</span></div>

<!-- code -->
<div id="code">
<div id="curline"><i style="left:0;top:0;width:1334px;height:1.900px"></i><i style="left:0;top:17.300px;width:1334px;height:1.900px"></i><i style="left:0;top:0;width:1.700px;height:19.200px"></i></div>
<div class="ln" style="top:-0.60px">1</div>
<div class="cl" style="top:-0.60px"><span style="color:#7ca668"># Copyright (c) Meta Platforms, Inc. and affiliates.</span></div>
<div class="ln" style="top:17.40px">2</div>
<div class="cl" style="top:17.40px"></div>
<div class="ln" style="top:35.40px">3</div>
<div class="cl" style="top:35.40px"><span style="color:#c586c0">from</span> <span style="color:#4ec9b0">dataclasses</span> <span style="color:#c586c0">import</span> <span style="color:#dcdcaa">dataclass</span></div>
<div class="ln" style="top:53.40px">4</div>
<div class="cl" style="top:53.40px"><span style="color:#c586c0">from</span> <span style="color:#4ec9b0">functools</span> <span style="color:#c586c0">import</span> <span style="color:#4ec9b0">partial</span></div>
<div class="ln" style="top:71.40px">5</div>
<div class="cl" style="top:71.40px"><span style="color:#c586c0">import</span> <span style="color:#4ec9b0">math</span></div>
<div class="ln" style="top:89.40px">6</div>
<div class="cl" style="top:89.40px"></div>
<div class="ln" style="top:107.40px">7</div>
<div class="cl" style="top:107.40px"><span style="color:#c586c0">import</span> <span style="color:#4ec9b0">logging</span></div>
<div class="ln" style="top:125.40px">8</div>
<div class="cl" style="top:125.40px"><span style="color:#c586c0">from</span> <span style="color:#4ec9b0">torch</span> <span style="color:#c586c0">import</span> <span style="color:#4ec9b0">nn</span></div>
<div class="ln" style="top:143.40px">9</div>
<div class="cl" style="top:143.40px"><span style="color:#c586c0">from</span> <span style="color:#4ec9b0">torch</span>.<span style="color:#4ec9b0">optim</span> <span style="color:#c586c0">import</span> <span style="color:#4ec9b0">AdamW</span>, <span style="color:#4ec9b0">lr_scheduler</span></div>
<div class="ln" style="top:161.40px">10</div>
<div class="cl" style="top:161.40px"></div>
<div class="ln" style="top:179.40px">11</div>
<div class="cl" style="top:179.40px"><span style="color:#9cdcfe">logger</span> = <span style="color:#4ec9b0">logging</span>.<span style="color:#dcdcaa">getLogger</span><span style="color:#ffd700">()</span></div>
<div class="ln cur" style="top:197.40px">12</div>
<div class="cl" style="top:197.40px"></div>
<div class="ln" style="top:215.40px">13</div>
<div class="cl" style="top:215.40px"></div>
<div class="ln" style="top:233.40px">14</div>
<div class="cl" style="top:233.40px"><span style="color:#dcdcaa">@dataclass</span></div>
<div class="ln" style="top:251.40px">15</div>
<div class="cl" style="top:251.40px"><span style="color:#569cd6">class</span> <span style="color:#4ec9b0">OptimArgs</span>:</div>
<div class="ln" style="top:269.40px">16</div>
<div class="cl" style="top:269.40px"><i class="rb" style="left:0.00px;background:rgba(255,255,120,.098)"></i><i class="ig" style="left:0.00px"></i>    <span style="color:#9cdcfe">lr</span>: <span style="color:#4ec9b0">float</span> = <span style="color:#b5cea8">3e-4</span></div>
<div class="ln" style="top:287.40px">17</div>
<div class="cl" style="top:287.40px"><i class="rb" style="left:0.00px;background:rgba(255,255,120,.098)"></i><i class="ig" style="left:0.00px"></i>    <span style="color:#9cdcfe">weight_decay</span>: <span style="color:#4ec9b0">float</span> = <span style="color:#b5cea8">0.1</span></div>
<div class="ln" style="top:305.40px">18</div>
<div class="cl" style="top:305.40px"><i class="rb" style="left:0.00px;background:rgba(255,255,120,.098)"></i><i class="ig" style="left:0.00px"></i>    <span style="color:#9cdcfe">epsilon</span>: <span style="color:#4ec9b0">float</span> = <span style="color:#b5cea8">1e-8</span></div>
<div class="ln" style="top:323.40px">19</div>
<div class="cl" style="top:323.40px"><i class="rb" style="left:0.00px;background:rgba(255,255,120,.098)"></i><i class="ig" style="left:0.00px"></i>    <span style="color:#9cdcfe">beta1</span>: <span style="color:#4ec9b0">float</span> = <span style="color:#b5cea8">0.9</span></div>
<div class="ln" style="top:341.40px">20</div>
<div class="cl" style="top:341.40px"><i class="rb" style="left:0.00px;background:rgba(255,255,120,.098)"></i><i class="ig" style="left:0.00px"></i>    <span style="color:#9cdcfe">beta2</span>: <span style="color:#4ec9b0">float</span> = <span style="color:#b5cea8">0.95</span></div>
<div class="ln" style="top:359.40px">21</div>
<div class="cl" style="top:359.40px"><i class="rb" style="left:0.00px;background:rgba(255,255,120,.098)"></i><i class="ig" style="left:0.00px"></i>    <span style="color:#9cdcfe">clip</span>: <span style="color:#4ec9b0">float</span> = <span style="color:#b5cea8">1.0</span></div>
<div class="ln" style="top:377.40px">22</div>
<div class="cl" style="top:377.40px"><i class="ig" style="left:0.00px"></i></div>
<div class="ln" style="top:395.40px">23</div>
<div class="cl" style="top:395.40px"><i class="rb" style="left:0.00px;background:rgba(255,255,120,.098)"></i><i class="ig" style="left:0.00px"></i>    <span style="color:#9cdcfe">scheduler</span>: <span style="color:#4ec9b0">str</span> = <span style="color:#ce9178">&quot;cosine&quot;</span></div>
<div class="ln" style="top:413.40px">24</div>
<div class="cl" style="top:413.40px"><i class="rb" style="left:0.00px;background:rgba(255,255,120,.098)"></i><i class="ig" style="left:0.00px"></i>    <span style="color:#9cdcfe">warmup</span>: <span style="color:#4ec9b0">int</span> = <span style="color:#b5cea8">2000</span></div>
<div class="ln" style="top:431.40px">25</div>
<div class="cl" style="top:431.40px"><i class="rb" style="left:0.00px;background:rgba(255,255,120,.098)"></i><i class="ig" style="left:0.00px"></i>    <span style="color:#9cdcfe">lr_min_ratio</span>: <span style="color:#4ec9b0">float</span> = <span style="color:#b5cea8">0.1</span></div>
<div class="ln" style="top:449.40px">26</div>
<div class="cl" style="top:449.40px"><i class="rb" style="left:0.00px;background:rgba(255,255,120,.098)"></i><i class="ig" style="left:0.00px"></i>    <span style="color:#9cdcfe">cycle_length</span>: <span style="color:#4ec9b0">float</span> = <span style="color:#b5cea8">1.0</span></div>
<div class="ln" style="top:467.40px">27</div>
<div class="cl" style="top:467.40px"><i class="rb" style="left:0.00px;background:rgba(255,255,120,.098)"></i><i class="ig" style="left:0.00px"></i>    <span style="color:#9cdcfe">cosine_theta</span>: <span style="color:#4ec9b0">float</span> = <span style="color:#b5cea8">1.0</span></div>
<div class="ln" style="top:485.40px">28</div>
<div class="cl" style="top:485.40px"><i class="rb" style="left:0.00px;background:rgba(255,255,120,.098)"></i><i class="ig" style="left:0.00px"></i>    <span style="color:#9cdcfe">annealing_step</span>: <span style="color:#4ec9b0">int</span> = <span style="color:#b5cea8">1000</span></div>
<div class="ln" style="top:503.40px">29</div>
<div class="cl" style="top:503.40px"><i class="ig" style="left:0.00px"></i></div>
<div class="ln" style="top:521.40px">30</div>
<div class="cl" style="top:521.40px"><i class="rb" style="left:0.00px;background:rgba(255,255,120,.098)"></i><i class="ig" style="left:0.00px"></i>    <span style="color:#9cdcfe">exp_factor</span>: <span style="color:#4ec9b0">float</span> = <span style="color:#b5cea8">0.5</span></div>
<div class="ln" style="top:539.40px">31</div>
<div class="cl" style="top:539.40px"></div>
<div class="ln" style="top:557.40px">32</div>
<div class="cl" style="top:557.40px"></div>
<div class="ln" style="top:575.40px">33</div>
<div class="cl" style="top:575.40px"><span style="color:#569cd6">def</span> <span style="color:#dcdcaa">lr_linear</span><span style="color:#ffd700">(</span><span style="color:#9cdcfe">step</span>: <span style="color:#4ec9b0">int</span>, <span style="color:#9cdcfe">warmup</span>: <span style="color:#4ec9b0">int</span>, <span style="color:#9cdcfe">n_steps</span>: <span style="color:#4ec9b0">int</span>, <span style="color:#9cdcfe">min_ratio</span>: <span style="color:#4ec9b0">float</span><span style="color:#ffd700">)</span> -&gt; <span style="color:#4ec9b0">float</span>:</div>
<div class="ln" style="top:593.40px">34</div>
<div class="cl" style="top:593.40px"><i class="rb" style="left:0.00px;background:rgba(255,255,120,.098)"></i><i class="ig" style="left:0.00px"></i>    <span style="color:#c586c0">if</span> <span style="color:#9cdcfe">step</span> &lt; <span style="color:#9cdcfe">warmup</span>:</div>
<div class="ln" style="top:611.40px">35</div>
<div class="cl" style="top:611.40px"><i class="rb" style="left:0.00px;background:rgba(255,255,120,.098)"></i><i class="ig" style="left:0.00px"></i><i class="rb" style="left:28.90px;background:rgba(127,255,150,.085)"></i><i class="ig" style="left:28.90px"></i>        <span style="color:#9cdcfe">lr</span> = <span style="color:#4ec9b0">float</span><span style="color:#ffd700">(</span><span style="color:#9cdcfe">step</span><span style="color:#ffd700">)</span> / <span style="color:#9cdcfe">warmup</span></div>
<div class="ln" style="top:629.40px">36</div>
<div class="cl" style="top:629.40px"><i class="rb" style="left:0.00px;background:rgba(255,255,120,.098)"></i><i class="ig" style="left:0.00px"></i>    <span style="color:#c586c0">elif</span> <span style="color:#9cdcfe">step</span> &lt;= <span style="color:#9cdcfe">n_steps</span>:</div>
<div class="ln" style="top:647.40px">37</div>
<div class="cl" style="top:647.40px"><i class="rb" style="left:0.00px;background:rgba(255,255,120,.098)"></i><i class="ig" style="left:0.00px"></i><i class="rb" style="left:28.90px;background:rgba(127,255,150,.085)"></i><i class="ig" style="left:28.90px"></i>        <span style="color:#9cdcfe">s</span> = <span style="color:#4ec9b0">float</span><span style="color:#ffd700">(</span><span style="color:#9cdcfe">step</span> - <span style="color:#9cdcfe">warmup</span><span style="color:#ffd700">)</span> / <span style="color:#ffd700">(</span><span style="color:#9cdcfe">n_steps</span> - <span style="color:#9cdcfe">warmup</span><span style="color:#ffd700">)</span></div>
<div class="ln" style="top:665.40px">38</div>
<div class="cl" style="top:665.40px"><i class="rb" style="left:0.00px;background:rgba(255,255,120,.098)"></i><i class="ig" style="left:0.00px"></i><i class="rb" style="left:28.90px;background:rgba(127,255,150,.085)"></i><i class="ig" style="left:28.90px"></i>        <span style="color:#9cdcfe">lr</span> = <span style="color:#9cdcfe">s</span> * <span style="color:#9cdcfe">min_ratio</span> + <span style="color:#ffd700">(</span><span style="color:#b5cea8">1</span> - <span style="color:#9cdcfe">s</span><span style="color:#ffd700">)</span></div>
<div class="ln" style="top:683.40px">39</div>
<div class="cl" style="top:683.40px"><i class="rb" style="left:0.00px;background:rgba(255,255,120,.098)"></i><i class="ig" style="left:0.00px"></i>    <span style="color:#c586c0">else</span>:</div>
<div class="ln" style="top:701.40px">40</div>
<div class="cl" style="top:701.40px"><i class="rb" style="left:0.00px;background:rgba(255,255,120,.098)"></i><i class="ig" style="left:0.00px"></i><i class="rb" style="left:28.90px;background:rgba(127,255,150,.085)"></i><i class="ig" style="left:28.90px"></i>        <span style="color:#9cdcfe">lr</span> = <span style="color:#9cdcfe">min_ratio</span></div>
<div class="ln" style="top:719.40px">41</div>
<div class="cl" style="top:719.40px"><i class="rb" style="left:0.00px;background:rgba(255,255,120,.098)"></i><i class="ig" style="left:0.00px"></i>    <span style="color:#c586c0">return</span> <span style="color:#9cdcfe">lr</span></div>
<div class="ln" style="top:737.40px">42</div>
<div class="cl" style="top:737.40px"></div>
<div class="ln" style="top:755.40px">43</div>
<div class="cl" style="top:755.40px"></div>
<div class="ln" style="top:773.40px">44</div>
<div class="cl" style="top:773.40px"><span style="color:#569cd6">def</span> <span style="color:#dcdcaa">lr_inv_sqrt</span><span style="color:#ffd700">(</span><span style="color:#9cdcfe">step</span>: <span style="color:#4ec9b0">int</span>, <span style="color:#9cdcfe">warmup</span>: <span style="color:#4ec9b0">int</span>, <span style="color:#9cdcfe">exp_factor</span>: <span style="color:#4ec9b0">float</span>, <span style="color:#9cdcfe">min_ratio</span>: <span style="color:#4ec9b0">float</span><span style="color:#ffd700">)</span> -&gt; <span style="color:#4ec9b0">float</span>:</div>
<div class="ln" style="top:791.40px">45</div>
<div class="cl" style="top:791.40px"><i class="rb" style="left:0.00px;background:rgba(255,255,120,.098)"></i><i class="ig" style="left:0.00px"></i>    <span style="color:#c586c0">if</span> <span style="color:#9cdcfe">step</span> &lt; <span style="color:#9cdcfe">warmup</span>:</div>
<div class="ln" style="top:809.40px">46</div>
<div class="cl" style="top:809.40px"><i class="rb" style="left:0.00px;background:rgba(255,255,120,.098)"></i><i class="ig" style="left:0.00px"></i><i class="rb" style="left:28.90px;background:rgba(127,255,150,.085)"></i><i class="ig" style="left:28.90px"></i>        <span style="color:#9cdcfe">lr</span> = <span style="color:#4ec9b0">float</span><span style="color:#ffd700">(</span><span style="color:#9cdcfe">step</span><span style="color:#ffd700">)</span> / <span style="color:#9cdcfe">warmup</span></div>
<div class="ln" style="top:827.40px">47</div>
<div class="cl" style="top:827.40px"><i class="rb" style="left:0.00px;background:rgba(255,255,120,.098)"></i><i class="ig" style="left:0.00px"></i>    <span style="color:#c586c0">else</span>:</div>
<div class="ln" style="top:845.40px">48</div>
<div class="cl" style="top:845.40px"><i class="rb" style="left:0.00px;background:rgba(255,255,120,.098)"></i><i class="ig" style="left:0.00px"></i><i class="rb" style="left:28.90px;background:rgba(127,255,150,.085)"></i><i class="ig" style="left:28.90px"></i>        <span style="color:#9cdcfe">lr</span> = <span style="color:#dcdcaa">max</span><span style="color:#ffd700">(</span><span style="color:#da70d6">(</span><span style="color:#9cdcfe">warmup</span>**<span style="color:#9cdcfe">exp_factor</span><span style="color:#da70d6">)</span> / <span style="color:#da70d6">(</span><span style="color:#9cdcfe">step</span>**<span style="color:#9cdcfe">exp_factor</span><span style="color:#da70d6">)</span>, <span style="color:#9cdcfe">min_ratio</span><span style="color:#ffd700">)</span></div>
<div class="ln" style="top:863.40px">49</div>
<div class="cl" style="top:863.40px"><i class="rb" style="left:0.00px;background:rgba(255,255,120,.098)"></i><i class="ig" style="left:0.00px"></i>    <span style="color:#c586c0">return</span> <span style="color:#9cdcfe">lr</span></div>
<div class="ln" style="top:881.40px">50</div>
<div class="cl" style="top:881.40px"></div>
<div class="ln" style="top:899.40px">51</div>
<div class="cl" style="top:899.40px"></div>
<div class="ln" style="top:917.40px">52</div>
<div class="cl" style="top:917.40px"><span style="color:#569cd6">def</span> <span style="color:#dcdcaa">lr_cosine</span><span style="color:#ffd700">(</span></div>
<div class="ln" style="top:935.40px">53</div>
<div class="cl" style="top:935.40px"><i class="rb" style="left:0.00px;background:rgba(255,255,120,.098)"></i><i class="ig" style="left:0.00px"></i>    <span style="color:#9cdcfe">step</span>: <span style="color:#4ec9b0">int</span>,</div>
<div class="ln" style="top:953.40px">54</div>
<div class="cl" style="top:953.40px"><i class="rb" style="left:0.00px;background:rgba(255,255,120,.098)"></i><i class="ig" style="left:0.00px"></i>    <span style="color:#9cdcfe">warmup</span>: <span style="color:#4ec9b0">int</span>,</div>
<div class="ln" style="top:971.40px">55</div>
<div class="cl" style="top:971.40px"><i class="rb" style="left:0.00px;background:rgba(255,255,120,.098)"></i><i class="ig" style="left:0.00px"></i>    <span style="color:#9cdcfe">n_steps</span>: <span style="color:#4ec9b0">int</span>,</div>
<div class="ln" style="top:989.40px">56</div>
<div class="cl" style="top:989.40px"><i class="rb" style="left:0.00px;background:rgba(255,255,120,.098)"></i><i class="ig" style="left:0.00px"></i>    <span style="color:#9cdcfe">cycle_length</span>: <span style="color:#4ec9b0">float</span>,</div>
<div class="ln" style="top:1007.40px">57</div>
<div class="cl" style="top:1007.40px"><i class="rb" style="left:0.00px;background:rgba(255,255,120,.098)"></i><i class="ig" style="left:0.00px"></i>    <span style="color:#9cdcfe">cosine_theta</span>: <span style="color:#4ec9b0">float</span>,</div>
<div id="mm"><i style="left:0.00px;top:0.00px;width:36.09px;background:#7ca668"></i><i style="left:0.00px;top:2.76px;width:2.78px;background:#c586c0"></i><i style="left:3.47px;top:2.76px;width:7.63px;background:#4ec9b0"></i><i style="left:11.80px;top:2.76px;width:4.16px;background:#c586c0"></i><i style="left:16.66px;top:2.76px;width:6.25px;background:#dcdcaa"></i><i style="left:0.00px;top:4.15px;width:2.78px;background:#c586c0"></i><i style="left:3.47px;top:4.15px;width:6.25px;background:#4ec9b0"></i><i style="left:10.41px;top:4.15px;width:4.16px;background:#c586c0"></i><i style="left:15.27px;top:4.15px;width:4.86px;background:#4ec9b0"></i><i style="left:0.00px;top:5.53px;width:4.16px;background:#c586c0"></i><i style="left:4.86px;top:5.53px;width:2.78px;background:#4ec9b0"></i><i style="left:0.00px;top:8.29px;width:4.16px;background:#c586c0"></i><i style="left:4.86px;top:8.29px;width:4.86px;background:#4ec9b0"></i><i style="left:0.00px;top:9.67px;width:2.78px;background:#c586c0"></i><i style="left:3.47px;top:9.67px;width:3.47px;background:#4ec9b0"></i><i style="left:7.63px;top:9.67px;width:4.16px;background:#c586c0"></i><i style="left:12.49px;top:9.67px;width:1.39px;background:#4ec9b0"></i><i style="left:0.00px;top:11.06px;width:2.78px;background:#c586c0"></i><i style="left:3.47px;top:11.06px;width:3.47px;background:#4ec9b0"></i><i style="left:7.63px;top:11.06px;width:3.47px;background:#4ec9b0"></i><i style="left:11.80px;top:11.06px;width:4.16px;background:#c586c0"></i><i style="left:16.66px;top:11.06px;width:3.47px;background:#4ec9b0"></i><i style="left:21.51px;top:11.06px;width:8.33px;background:#4ec9b0"></i><i style="left:0.00px;top:13.82px;width:4.16px;background:#9cdcfe"></i><i style="left:6.25px;top:13.82px;width:4.86px;background:#4ec9b0"></i><i style="left:11.80px;top:13.82px;width:6.25px;background:#dcdcaa"></i><i style="left:18.04px;top:13.82px;width:1.39px;background:#ffd700"></i><i style="left:0.00px;top:17.97px;width:6.94px;background:#dcdcaa"></i><i style="left:0.00px;top:19.35px;width:3.47px;background:#569cd6"></i><i style="left:4.16px;top:19.35px;width:6.25px;background:#4ec9b0"></i><i style="left:2.78px;top:20.73px;width:1.39px;background:#9cdcfe"></i><i style="left:5.55px;top:20.73px;width:3.47px;background:#4ec9b0"></i><i style="left:11.10px;top:20.73px;width:2.78px;background:#b5cea8"></i><i style="left:2.78px;top:22.11px;width:8.33px;background:#9cdcfe"></i><i style="left:12.49px;top:22.11px;width:3.47px;background:#4ec9b0"></i><i style="left:18.04px;top:22.11px;width:2.08px;background:#b5cea8"></i><i style="left:2.78px;top:23.49px;width:4.86px;background:#9cdcfe"></i><i style="left:9.02px;top:23.49px;width:3.47px;background:#4ec9b0"></i><i style="left:14.57px;top:23.49px;width:2.78px;background:#b5cea8"></i><i style="left:2.78px;top:24.88px;width:3.47px;background:#9cdcfe"></i><i style="left:7.63px;top:24.88px;width:3.47px;background:#4ec9b0"></i><i style="left:13.19px;top:24.88px;width:2.08px;background:#b5cea8"></i><i style="left:2.78px;top:26.26px;width:3.47px;background:#9cdcfe"></i><i style="left:7.63px;top:26.26px;width:3.47px;background:#4ec9b0"></i><i style="left:13.19px;top:26.26px;width:2.78px;background:#b5cea8"></i><i style="left:2.78px;top:27.64px;width:2.78px;background:#9cdcfe"></i><i style="left:6.94px;top:27.64px;width:3.47px;background:#4ec9b0"></i><i style="left:12.49px;top:27.64px;width:2.08px;background:#b5cea8"></i><i style="left:2.78px;top:30.40px;width:6.25px;background:#9cdcfe"></i><i style="left:10.41px;top:30.40px;width:2.08px;background:#4ec9b0"></i><i style="left:14.57px;top:30.40px;width:5.55px;background:#ce9178"></i><i style="left:2.78px;top:31.79px;width:4.16px;background:#9cdcfe"></i><i style="left:8.33px;top:31.79px;width:2.08px;background:#4ec9b0"></i><i style="left:12.49px;top:31.79px;width:2.78px;background:#b5cea8"></i><i style="left:2.78px;top:33.17px;width:8.33px;background:#9cdcfe"></i><i style="left:12.49px;top:33.17px;width:3.47px;background:#4ec9b0"></i><i style="left:18.04px;top:33.17px;width:2.08px;background:#b5cea8"></i><i style="left:2.78px;top:34.55px;width:8.33px;background:#9cdcfe"></i><i style="left:12.49px;top:34.55px;width:3.47px;background:#4ec9b0"></i><i style="left:18.04px;top:34.55px;width:2.08px;background:#b5cea8"></i><i style="left:2.78px;top:35.93px;width:8.33px;background:#9cdcfe"></i><i style="left:12.49px;top:35.93px;width:3.47px;background:#4ec9b0"></i><i style="left:18.04px;top:35.93px;width:2.08px;background:#b5cea8"></i><i style="left:2.78px;top:37.31px;width:9.72px;background:#9cdcfe"></i><i style="left:13.88px;top:37.31px;width:2.08px;background:#4ec9b0"></i><i style="left:18.04px;top:37.31px;width:2.78px;background:#b5cea8"></i><i style="left:2.78px;top:40.08px;width:6.94px;background:#9cdcfe"></i><i style="left:11.10px;top:40.08px;width:3.47px;background:#4ec9b0"></i><i style="left:16.66px;top:40.08px;width:2.08px;background:#b5cea8"></i><i style="left:0.00px;top:44.22px;width:2.08px;background:#569cd6"></i><i style="left:2.78px;top:44.22px;width:6.25px;background:#dcdcaa"></i><i style="left:9.02px;top:44.22px;width:0.69px;background:#ffd700"></i><i style="left:9.72px;top:44.22px;width:2.78px;background:#9cdcfe"></i><i style="left:13.88px;top:44.22px;width:2.08px;background:#4ec9b0"></i><i style="left:17.35px;top:44.22px;width:4.16px;background:#9cdcfe"></i><i style="left:22.90px;top:44.22px;width:2.08px;background:#4ec9b0"></i><i style="left:26.37px;top:44.22px;width:4.86px;background:#9cdcfe"></i><i style="left:32.62px;top:44.22px;width:2.08px;background:#4ec9b0"></i><i style="left:36.09px;top:44.22px;width:6.25px;background:#9cdcfe"></i><i style="left:43.72px;top:44.22px;width:3.47px;background:#4ec9b0"></i><i style="left:47.19px;top:44.22px;width:0.69px;background:#ffd700"></i><i style="left:50.66px;top:44.22px;width:3.47px;background:#4ec9b0"></i><i style="left:2.78px;top:45.61px;width:1.39px;background:#c586c0"></i><i style="left:4.86px;top:45.61px;width:2.78px;background:#9cdcfe"></i><i style="left:9.72px;top:45.61px;width:4.16px;background:#9cdcfe"></i><i style="left:5.55px;top:46.99px;width:1.39px;background:#9cdcfe"></i><i style="left:9.02px;top:46.99px;width:3.47px;background:#4ec9b0"></i><i style="left:12.49px;top:46.99px;width:0.69px;background:#ffd700"></i><i style="left:13.19px;top:46.99px;width:2.78px;background:#9cdcfe"></i><i style="left:15.96px;top:46.99px;width:0.69px;background:#ffd700"></i><i style="left:18.74px;top:46.99px;width:4.16px;background:#9cdcfe"></i><i style="left:2.78px;top:48.37px;width:2.78px;background:#c586c0"></i><i style="left:6.25px;top:48.37px;width:2.78px;background:#9cdcfe"></i><i style="left:11.80px;top:48.37px;width:4.86px;background:#9cdcfe"></i><i style="left:5.55px;top:49.75px;width:0.69px;background:#9cdcfe"></i><i style="left:8.33px;top:49.75px;width:3.47px;background:#4ec9b0"></i><i style="left:11.80px;top:49.75px;width:0.69px;background:#ffd700"></i><i style="left:12.49px;top:49.75px;width:2.78px;background:#9cdcfe"></i><i style="left:17.35px;top:49.75px;width:4.16px;background:#9cdcfe"></i><i style="left:21.51px;top:49.75px;width:0.69px;background:#ffd700"></i><i style="left:24.29px;top:49.75px;width:0.69px;background:#ffd700"></i><i style="left:24.98px;top:49.75px;width:4.86px;background:#9cdcfe"></i><i style="left:31.92px;top:49.75px;width:4.16px;background:#9cdcfe"></i><i style="left:36.09px;top:49.75px;width:0.69px;background:#ffd700"></i><i style="left:5.55px;top:51.13px;width:1.39px;background:#9cdcfe"></i><i style="left:9.02px;top:51.13px;width:0.69px;background:#9cdcfe"></i><i style="left:11.80px;top:51.13px;width:6.25px;background:#9cdcfe"></i><i style="left:20.13px;top:51.13px;width:0.69px;background:#ffd700"></i><i style="left:20.82px;top:51.13px;width:0.69px;background:#b5cea8"></i><i style="left:23.60px;top:51.13px;width:0.69px;background:#9cdcfe"></i><i style="left:24.29px;top:51.13px;width:0.69px;background:#ffd700"></i><i style="left:2.78px;top:52.52px;width:2.78px;background:#c586c0"></i><i style="left:5.55px;top:53.90px;width:1.39px;background:#9cdcfe"></i><i style="left:9.02px;top:53.90px;width:6.25px;background:#9cdcfe"></i><i style="left:2.78px;top:55.28px;width:4.16px;background:#c586c0"></i><i style="left:7.63px;top:55.28px;width:1.39px;background:#9cdcfe"></i><i style="left:0.00px;top:59.43px;width:2.08px;background:#569cd6"></i><i style="left:2.78px;top:59.43px;width:7.63px;background:#dcdcaa"></i><i style="left:10.41px;top:59.43px;width:0.69px;background:#ffd700"></i><i style="left:11.10px;top:59.43px;width:2.78px;background:#9cdcfe"></i><i style="left:15.27px;top:59.43px;width:2.08px;background:#4ec9b0"></i><i style="left:18.74px;top:59.43px;width:4.16px;background:#9cdcfe"></i><i style="left:24.29px;top:59.43px;width:2.08px;background:#4ec9b0"></i><i style="left:27.76px;top:59.43px;width:6.94px;background:#9cdcfe"></i><i style="left:36.09px;top:59.43px;width:3.47px;background:#4ec9b0"></i><i style="left:40.95px;top:59.43px;width:6.25px;background:#9cdcfe"></i><i style="left:48.58px;top:59.43px;width:3.47px;background:#4ec9b0"></i><i style="left:52.05px;top:59.43px;width:0.69px;background:#ffd700"></i><i style="left:55.52px;top:59.43px;width:3.47px;background:#4ec9b0"></i><i style="left:2.78px;top:60.81px;width:1.39px;background:#c586c0"></i><i style="left:4.86px;top:60.81px;width:2.78px;background:#9cdcfe"></i><i style="left:9.72px;top:60.81px;width:4.16px;background:#9cdcfe"></i><i style="left:5.55px;top:62.19px;width:1.39px;background:#9cdcfe"></i><i style="left:9.02px;top:62.19px;width:3.47px;background:#4ec9b0"></i><i style="left:12.49px;top:62.19px;width:0.69px;background:#ffd700"></i><i style="left:13.19px;top:62.19px;width:2.78px;background:#9cdcfe"></i><i style="left:15.96px;top:62.19px;width:0.69px;background:#ffd700"></i><i style="left:18.74px;top:62.19px;width:4.16px;background:#9cdcfe"></i><i style="left:2.78px;top:63.57px;width:2.78px;background:#c586c0"></i><i style="left:5.55px;top:64.95px;width:1.39px;background:#9cdcfe"></i><i style="left:9.02px;top:64.95px;width:2.08px;background:#dcdcaa"></i><i style="left:11.10px;top:64.95px;width:0.69px;background:#ffd700"></i><i style="left:11.80px;top:64.95px;width:0.69px;background:#da70d6"></i><i style="left:12.49px;top:64.95px;width:4.16px;background:#9cdcfe"></i><i style="left:18.04px;top:64.95px;width:6.94px;background:#9cdcfe"></i><i style="left:24.98px;top:64.95px;width:0.69px;background:#da70d6"></i><i style="left:27.76px;top:64.95px;width:0.69px;background:#da70d6"></i><i style="left:28.45px;top:64.95px;width:2.78px;background:#9cdcfe"></i><i style="left:32.62px;top:64.95px;width:6.94px;background:#9cdcfe"></i><i style="left:39.56px;top:64.95px;width:0.69px;background:#da70d6"></i><i style="left:41.64px;top:64.95px;width:6.25px;background:#9cdcfe"></i><i style="left:47.89px;top:64.95px;width:0.69px;background:#ffd700"></i><i style="left:2.78px;top:66.34px;width:4.16px;background:#c586c0"></i><i style="left:7.63px;top:66.34px;width:1.39px;background:#9cdcfe"></i><i style="left:0.00px;top:70.48px;width:2.08px;background:#569cd6"></i><i style="left:2.78px;top:70.48px;width:6.25px;background:#dcdcaa"></i><i style="left:9.02px;top:70.48px;width:0.69px;background:#ffd700"></i><i style="left:2.78px;top:71.86px;width:2.78px;background:#9cdcfe"></i><i style="left:6.94px;top:71.86px;width:2.08px;background:#4ec9b0"></i><i style="left:2.78px;top:73.25px;width:4.16px;background:#9cdcfe"></i><i style="left:8.33px;top:73.25px;width:2.08px;background:#4ec9b0"></i><i style="left:2.78px;top:74.63px;width:4.86px;background:#9cdcfe"></i><i style="left:9.02px;top:74.63px;width:2.08px;background:#4ec9b0"></i><i style="left:2.78px;top:76.01px;width:8.33px;background:#9cdcfe"></i><i style="left:12.49px;top:76.01px;width:3.47px;background:#4ec9b0"></i><i style="left:2.78px;top:77.39px;width:8.33px;background:#9cdcfe"></i><i style="left:12.49px;top:77.39px;width:3.47px;background:#4ec9b0"></i><i style="left:2.78px;top:78.77px;width:3.47px;background:#9cdcfe"></i><i style="left:6.25px;top:78.77px;width:0.69px;background:#ffffff"></i><i style="left:7.63px;top:78.77px;width:3.47px;background:#4ec9b0"></i><i style="left:11.10px;top:78.77px;width:0.69px;background:#ffffff"></i><i style="left:2.78px;top:80.16px;width:6.25px;background:#9cdcfe"></i><i style="left:9.02px;top:80.16px;width:0.69px;background:#ffffff"></i><i style="left:10.41px;top:80.16px;width:3.47px;background:#4ec9b0"></i><i style="left:13.88px;top:80.16px;width:0.69px;background:#ffffff"></i><i style="left:0.00px;top:81.54px;width:0.69px;background:#ffffff"></i><i style="left:1.39px;top:81.54px;width:1.39px;background:#ffffff"></i><i style="left:3.47px;top:81.54px;width:3.47px;background:#4ec9b0"></i><i style="left:6.94px;top:81.54px;width:0.69px;background:#ffffff"></i><i style="left:2.78px;top:82.92px;width:2.78px;background:#9cdcfe"></i><i style="left:6.25px;top:82.92px;width:0.69px;background:#ffffff"></i><i style="left:7.63px;top:82.92px;width:1.39px;background:#ffffff"></i><i style="left:9.02px;top:82.92px;width:2.78px;background:#9cdcfe"></i><i style="left:12.49px;top:82.92px;width:1.39px;background:#ffffff"></i><i style="left:14.57px;top:82.92px;width:0.69px;background:#ffffff"></i><i style="left:15.27px;top:82.92px;width:4.86px;background:#9cdcfe"></i><i style="left:20.13px;top:82.92px;width:0.69px;background:#ffffff"></i><i style="left:20.82px;top:82.92px;width:8.33px;background:#9cdcfe"></i><i style="left:29.15px;top:82.92px;width:1.39px;background:#ffffff"></i><i style="left:31.23px;top:82.92px;width:0.69px;background:#ffffff"></i><i style="left:32.62px;top:82.92px;width:0.69px;background:#b5cea8"></i><i style="left:33.31px;top:82.92px;width:0.69px;background:#ffffff"></i><i style="left:34.70px;top:82.92px;width:0.69px;background:#ffffff"></i><i style="left:36.09px;top:82.92px;width:0.69px;background:#ffffff"></i><i style="left:36.78px;top:82.92px;width:0.69px;background:#b5cea8"></i><i style="left:38.17px;top:82.92px;width:0.69px;background:#ffffff"></i><i style="left:39.56px;top:82.92px;width:0.69px;background:#b5cea8"></i><i style="left:2.78px;top:84.30px;width:1.39px;background:#c586c0"></i><i style="left:4.86px;top:84.30px;width:2.78px;background:#9cdcfe"></i><i style="left:8.33px;top:84.30px;width:0.69px;background:#ffffff"></i><i style="left:9.72px;top:84.30px;width:4.16px;background:#9cdcfe"></i><i style="left:13.88px;top:84.30px;width:0.69px;background:#ffffff"></i><i style="left:5.55px;top:85.68px;width:1.39px;background:#9cdcfe"></i><i style="left:7.63px;top:85.68px;width:0.69px;background:#ffffff"></i><i style="left:9.02px;top:85.68px;width:3.47px;background:#4ec9b0"></i><i style="left:12.49px;top:85.68px;width:0.69px;background:#ffffff"></i><i style="left:13.19px;top:85.68px;width:2.78px;background:#9cdcfe"></i><i style="left:15.96px;top:85.68px;width:0.69px;background:#ffffff"></i><i style="left:17.35px;top:85.68px;width:0.69px;background:#ffffff"></i><i style="left:18.74px;top:85.68px;width:4.16px;background:#9cdcfe"></i><i style="left:2.78px;top:87.07px;width:2.78px;background:#c586c0"></i><i style="left:6.25px;top:87.07px;width:2.78px;background:#9cdcfe"></i><i style="left:9.72px;top:87.07px;width:1.39px;background:#ffffff"></i><i style="left:11.80px;top:87.07px;width:4.86px;background:#9cdcfe"></i><i style="left:16.66px;top:87.07px;width:0.69px;background:#ffffff"></i><i style="left:5.55px;top:88.45px;width:0.69px;background:#9cdcfe"></i><i style="left:6.94px;top:88.45px;width:0.69px;background:#ffffff"></i><i style="left:8.33px;top:88.45px;width:3.47px;background:#4ec9b0"></i><i style="left:11.80px;top:88.45px;width:0.69px;background:#ffffff"></i><i style="left:12.49px;top:88.45px;width:2.78px;background:#9cdcfe"></i><i style="left:15.96px;top:88.45px;width:0.69px;background:#ffffff"></i><i style="left:17.35px;top:88.45px;width:4.16px;background:#9cdcfe"></i><i style="left:21.51px;top:88.45px;width:0.69px;background:#ffffff"></i><i style="left:22.90px;top:88.45px;width:0.69px;background:#ffffff"></i><i style="left:24.29px;top:88.45px;width:0.69px;background:#ffffff"></i><i style="left:24.98px;top:88.45px;width:4.86px;background:#9cdcfe"></i><i style="left:30.54px;top:88.45px;width:0.69px;background:#ffffff"></i><i style="left:31.92px;top:88.45px;width:4.16px;background:#9cdcfe"></i><i style="left:36.09px;top:88.45px;width:0.69px;background:#ffffff"></i><i style="left:5.55px;top:89.83px;width:1.39px;background:#9cdcfe"></i><i style="left:7.63px;top:89.83px;width:0.69px;background:#ffffff"></i><i style="left:9.02px;top:89.83px;width:6.25px;background:#9cdcfe"></i><i style="left:15.96px;top:89.83px;width:0.69px;background:#ffffff"></i><i style="left:17.35px;top:89.83px;width:2.08px;background:#b5cea8"></i><i style="left:20.13px;top:89.83px;width:0.69px;background:#ffffff"></i><i style="left:21.51px;top:89.83px;width:0.69px;background:#ffffff"></i><i style="left:22.21px;top:89.83px;width:0.69px;background:#b5cea8"></i><i style="left:23.60px;top:89.83px;width:0.69px;background:#ffffff"></i><i style="left:24.98px;top:89.83px;width:6.25px;background:#9cdcfe"></i><i style="left:31.23px;top:89.83px;width:0.69px;background:#ffffff"></i><i style="left:32.62px;top:89.83px;width:0.69px;background:#ffffff"></i><i style="left:34.01px;top:89.83px;width:0.69px;background:#ffffff"></i><i style="left:8.33px;top:91.21px;width:2.78px;background:#9cdcfe"></i><i style="left:11.80px;top:91.21px;width:0.69px;background:#ffffff"></i><i style="left:13.19px;top:91.21px;width:2.78px;background:#4ec9b0"></i><i style="left:15.96px;top:91.21px;width:0.69px;background:#ffffff"></i><i style="left:16.66px;top:91.21px;width:2.08px;background:#9cdcfe"></i><i style="left:18.74px;top:91.21px;width:0.69px;background:#ffffff"></i><i style="left:19.43px;top:91.21px;width:2.78px;background:#4ec9b0"></i><i style="left:22.21px;top:91.21px;width:0.69px;background:#ffffff"></i><i style="left:22.90px;top:91.21px;width:1.39px;background:#9cdcfe"></i><i style="left:24.98px;top:91.21px;width:0.69px;background:#ffffff"></i><i style="left:26.37px;top:91.21px;width:0.69px;background:#9cdcfe"></i><i style="left:27.07px;top:91.21px;width:1.39px;background:#ffffff"></i><i style="left:28.45px;top:91.21px;width:3.47px;background:#9cdcfe"></i><i style="left:32.62px;top:91.21px;width:0.69px;background:#ffffff"></i><i style="left:34.01px;top:91.21px;width:8.33px;background:#9cdcfe"></i><i style="left:42.33px;top:91.21px;width:0.69px;background:#ffffff"></i><i style="left:43.72px;top:91.21px;width:0.69px;background:#ffffff"></i><i style="left:45.11px;top:91.21px;width:0.69px;background:#b5cea8"></i><i style="left:5.55px;top:92.59px;width:0.69px;background:#ffffff"></i><i style="left:2.78px;top:93.98px;width:2.78px;background:#c586c0"></i><i style="left:5.55px;top:93.98px;width:0.69px;background:#ffffff"></i><i style="left:5.55px;top:95.36px;width:1.39px;background:#9cdcfe"></i><i style="left:7.63px;top:95.36px;width:0.69px;background:#ffffff"></i><i style="left:9.02px;top:95.36px;width:6.25px;background:#9cdcfe"></i><i style="left:2.78px;top:96.74px;width:4.16px;background:#c586c0"></i><i style="left:7.63px;top:96.74px;width:1.39px;background:#9cdcfe"></i><i style="left:0.00px;top:100.89px;width:2.08px;background:#569cd6"></i><i style="left:2.78px;top:100.89px;width:7.63px;background:#9cdcfe"></i><i style="left:10.41px;top:100.89px;width:0.69px;background:#ffffff"></i><i style="left:11.10px;top:100.89px;width:2.78px;background:#9cdcfe"></i><i style="left:13.88px;top:100.89px;width:0.69px;background:#ffffff"></i><i style="left:15.27px;top:100.89px;width:6.25px;background:#4ec9b0"></i><i style="left:21.51px;top:100.89px;width:0.69px;background:#ffffff"></i><i style="left:22.90px;top:100.89px;width:4.86px;background:#9cdcfe"></i><i style="left:27.76px;top:100.89px;width:0.69px;background:#ffffff"></i><i style="left:29.15px;top:100.89px;width:2.08px;background:#4ec9b0"></i><i style="left:31.23px;top:100.89px;width:1.39px;background:#ffffff"></i><i style="left:2.78px;top:102.27px;width:1.39px;background:#c586c0"></i><i style="left:4.86px;top:102.27px;width:2.78px;background:#9cdcfe"></i><i style="left:7.63px;top:102.27px;width:0.69px;background:#ffffff"></i><i style="left:8.33px;top:102.27px;width:6.25px;background:#9cdcfe"></i><i style="left:15.27px;top:102.27px;width:1.39px;background:#ffffff"></i><i style="left:17.35px;top:102.27px;width:6.94px;background:#ce9178"></i><i style="left:24.29px;top:102.27px;width:0.69px;background:#ffffff"></i><i style="left:5.55px;top:103.65px;width:3.47px;background:#9cdcfe"></i><i style="left:9.72px;top:103.65px;width:0.69px;background:#ffffff"></i><i style="left:11.10px;top:103.65px;width:4.16px;background:#569cd6"></i><i style="left:15.96px;top:103.65px;width:0.69px;background:#9cdcfe"></i><i style="left:16.66px;top:103.65px;width:0.69px;background:#ffffff"></i><i style="left:18.04px;top:103.65px;width:2.08px;background:#b5cea8"></i><i style="left:2.78px;top:105.03px;width:2.78px;background:#c586c0"></i><i style="left:6.25px;top:105.03px;width:2.78px;background:#9cdcfe"></i><i style="left:9.02px;top:105.03px;width:0.69px;background:#ffffff"></i><i style="left:9.72px;top:105.03px;width:6.25px;background:#9cdcfe"></i><i style="left:16.66px;top:105.03px;width:1.39px;background:#ffffff"></i><i style="left:18.74px;top:105.03px;width:5.55px;background:#ce9178"></i><i style="left:24.29px;top:105.03px;width:0.69px;background:#ffffff"></i><i style="left:5.55px;top:106.41px;width:3.47px;background:#9cdcfe"></i><i style="left:9.72px;top:106.41px;width:0.69px;background:#ffffff"></i><i style="left:11.10px;top:106.41px;width:4.86px;background:#4ec9b0"></i><i style="left:15.96px;top:106.41px;width:0.69px;background:#ffffff"></i><i style="left:8.33px;top:107.80px;width:6.25px;background:#9cdcfe"></i><i style="left:14.57px;top:107.80px;width:0.69px;background:#ffffff"></i><i style="left:15.96px;top:107.80px;width:4.16px;background:#9cdcfe"></i><i style="left:20.13px;top:107.80px;width:0.69px;background:#ffffff"></i><i style="left:20.82px;top:107.80px;width:2.78px;background:#9cdcfe"></i><i style="left:23.60px;top:107.80px;width:0.69px;background:#ffffff"></i><i style="left:24.29px;top:107.80px;width:4.16px;background:#9cdcfe"></i><i style="left:28.45px;top:107.80px;width:0.69px;background:#ffffff"></i><i style="left:29.84px;top:107.80px;width:4.86px;background:#9cdcfe"></i><i style="left:34.70px;top:107.80px;width:0.69px;background:#ffffff"></i><i style="left:35.39px;top:107.80px;width:4.86px;background:#9cdcfe"></i><i style="left:40.25px;top:107.80px;width:0.69px;background:#ffffff"></i><i style="left:41.64px;top:107.80px;width:6.25px;background:#9cdcfe"></i><i style="left:47.89px;top:107.80px;width:0.69px;background:#ffffff"></i><i style="left:48.58px;top:107.80px;width:2.78px;background:#9cdcfe"></i><i style="left:51.36px;top:107.80px;width:0.69px;background:#ffffff"></i><i style="left:52.05px;top:107.80px;width:8.33px;background:#9cdcfe"></i><i style="left:5.55px;top:109.18px;width:0.69px;background:#ffffff"></i><i style="left:2.78px;top:110.56px;width:2.78px;background:#c586c0"></i><i style="left:6.25px;top:110.56px;width:2.78px;background:#9cdcfe"></i><i style="left:9.02px;top:110.56px;width:0.69px;background:#ffffff"></i><i style="left:9.72px;top:110.56px;width:6.25px;background:#9cdcfe"></i><i style="left:16.66px;top:110.56px;width:1.39px;background:#ffffff"></i><i style="left:18.74px;top:110.56px;width:6.94px;background:#ce9178"></i><i style="left:25.68px;top:110.56px;width:0.69px;background:#ffffff"></i><i style="left:5.55px;top:111.94px;width:3.47px;background:#9cdcfe"></i><i style="left:9.72px;top:111.94px;width:0.69px;background:#ffffff"></i><i style="left:11.10px;top:111.94px;width:4.86px;background:#4ec9b0"></i><i style="left:15.96px;top:111.94px;width:0.69px;background:#ffffff"></i><i style="left:8.33px;top:113.32px;width:7.63px;background:#9cdcfe"></i><i style="left:15.96px;top:113.32px;width:0.69px;background:#ffffff"></i><i style="left:8.33px;top:114.71px;width:4.16px;background:#9cdcfe"></i><i style="left:12.49px;top:114.71px;width:0.69px;background:#ffffff"></i><i style="left:13.19px;top:114.71px;width:2.78px;background:#9cdcfe"></i><i style="left:15.96px;top:114.71px;width:0.69px;background:#ffffff"></i><i style="left:16.66px;top:114.71px;width:4.16px;background:#9cdcfe"></i><i style="left:20.82px;top:114.71px;width:0.69px;background:#ffffff"></i><i style="left:8.33px;top:116.09px;width:6.94px;background:#9cdcfe"></i><i style="left:15.27px;top:116.09px;width:0.69px;background:#ffffff"></i><i style="left:15.96px;top:116.09px;width:2.78px;background:#9cdcfe"></i><i style="left:18.74px;top:116.09px;width:0.69px;background:#ffffff"></i><i style="left:19.43px;top:116.09px;width:6.94px;background:#9cdcfe"></i><i style="left:26.37px;top:116.09px;width:0.69px;background:#ffffff"></i><i style="left:8.33px;top:117.47px;width:6.25px;background:#9cdcfe"></i><i style="left:14.57px;top:117.47px;width:0.69px;background:#ffffff"></i><i style="left:15.27px;top:117.47px;width:2.78px;background:#9cdcfe"></i><i style="left:18.04px;top:117.47px;width:0.69px;background:#ffffff"></i><i style="left:18.74px;top:117.47px;width:8.33px;background:#9cdcfe"></i><i style="left:27.07px;top:117.47px;width:0.69px;background:#ffffff"></i><i style="left:5.55px;top:118.85px;width:0.69px;background:#ffffff"></i><i style="left:2.78px;top:120.23px;width:2.78px;background:#c586c0"></i><i style="left:6.25px;top:120.23px;width:2.78px;background:#9cdcfe"></i><i style="left:9.02px;top:120.23px;width:0.69px;background:#ffffff"></i><i style="left:9.72px;top:120.23px;width:6.25px;background:#9cdcfe"></i><i style="left:16.66px;top:120.23px;width:1.39px;background:#ffffff"></i><i style="left:18.74px;top:120.23px;width:5.55px;background:#ce9178"></i><i style="left:24.29px;top:120.23px;width:0.69px;background:#ffffff"></i><i style="left:5.55px;top:121.62px;width:3.47px;background:#9cdcfe"></i><i style="left:9.72px;top:121.62px;width:0.69px;background:#ffffff"></i><i style="left:11.10px;top:121.62px;width:4.86px;background:#4ec9b0"></i><i style="left:15.96px;top:121.62px;width:0.69px;background:#ffffff"></i><i style="left:8.33px;top:123.00px;width:6.25px;background:#9cdcfe"></i><i style="left:14.57px;top:123.00px;width:0.69px;background:#ffffff"></i><i style="left:8.33px;top:124.38px;width:4.16px;background:#9cdcfe"></i><i style="left:12.49px;top:124.38px;width:0.69px;background:#ffffff"></i><i style="left:13.19px;top:124.38px;width:2.78px;background:#9cdcfe"></i><i style="left:15.96px;top:124.38px;width:0.69px;background:#ffffff"></i><i style="left:16.66px;top:124.38px;width:4.16px;background:#9cdcfe"></i><i style="left:20.82px;top:124.38px;width:0.69px;background:#ffffff"></i><i style="left:8.33px;top:125.76px;width:4.86px;background:#9cdcfe"></i><i style="left:13.19px;top:125.76px;width:0.69px;background:#ffffff"></i><i style="left:13.88px;top:125.76px;width:4.86px;background:#9cdcfe"></i><i style="left:18.74px;top:125.76px;width:0.69px;background:#ffffff"></i><i style="left:8.33px;top:127.14px;width:8.33px;background:#9cdcfe"></i><i style="left:16.66px;top:127.14px;width:0.69px;background:#ffffff"></i><i style="left:17.35px;top:127.14px;width:2.78px;background:#9cdcfe"></i><i style="left:20.13px;top:127.14px;width:0.69px;background:#ffffff"></i><i style="left:20.82px;top:127.14px;width:8.33px;background:#9cdcfe"></i><i style="left:29.15px;top:127.14px;width:0.69px;background:#ffffff"></i><i style="left:8.33px;top:128.53px;width:3.47px;background:#9cdcfe"></i><i style="left:11.80px;top:128.53px;width:0.69px;background:#ffffff"></i><i style="left:12.49px;top:128.53px;width:2.78px;background:#9cdcfe"></i><i style="left:15.27px;top:128.53px;width:0.69px;background:#ffffff"></i><i style="left:15.96px;top:128.53px;width:8.33px;background:#9cdcfe"></i><i style="left:24.29px;top:128.53px;width:0.69px;background:#ffffff"></i><i style="left:8.33px;top:129.91px;width:6.25px;background:#9cdcfe"></i><i style="left:14.57px;top:129.91px;width:0.69px;background:#ffffff"></i><i style="left:15.27px;top:129.91px;width:2.78px;background:#9cdcfe"></i><i style="left:18.04px;top:129.91px;width:0.69px;background:#ffffff"></i><i style="left:18.74px;top:129.91px;width:8.33px;background:#9cdcfe"></i><i style="left:27.07px;top:129.91px;width:0.69px;background:#ffffff"></i><i style="left:5.55px;top:131.29px;width:0.69px;background:#ffffff"></i><i style="left:2.78px;top:132.67px;width:2.78px;background:#c586c0"></i><i style="left:5.55px;top:132.67px;width:0.69px;background:#ffffff"></i><i style="left:5.55px;top:134.05px;width:3.47px;background:#c586c0"></i><i style="left:9.72px;top:134.05px;width:13.19px;background:#4ec9b0"></i><i style="left:22.90px;top:134.05px;width:0.69px;background:#ffffff"></i><i style="left:23.60px;top:134.05px;width:26.37px;background:#ce9178"></i><i style="left:49.97px;top:134.05px;width:0.69px;background:#ffffff"></i><i style="left:2.78px;top:135.44px;width:4.16px;background:#c586c0"></i><i style="left:7.63px;top:135.44px;width:3.47px;background:#9cdcfe"></i><i style="left:0.00px;top:139.58px;width:2.08px;background:#569cd6"></i><i style="left:2.78px;top:139.58px;width:10.41px;background:#9cdcfe"></i><i style="left:13.19px;top:139.58px;width:0.69px;background:#ffffff"></i><i style="left:13.88px;top:139.58px;width:3.47px;background:#9cdcfe"></i><i style="left:17.35px;top:139.58px;width:0.69px;background:#ffffff"></i><i style="left:18.74px;top:139.58px;width:1.39px;background:#4ec9b0"></i><i style="left:20.13px;top:139.58px;width:0.69px;background:#ffffff"></i><i style="left:20.82px;top:139.58px;width:4.16px;background:#4ec9b0"></i><i style="left:24.98px;top:139.58px;width:0.69px;background:#ffffff"></i><i style="left:26.37px;top:139.58px;width:2.78px;background:#9cdcfe"></i><i style="left:29.15px;top:139.58px;width:0.69px;background:#ffffff"></i><i style="left:30.54px;top:139.58px;width:6.25px;background:#4ec9b0"></i><i style="left:36.78px;top:139.58px;width:0.69px;background:#ffffff"></i><i style="left:38.17px;top:139.58px;width:4.86px;background:#9cdcfe"></i><i style="left:43.03px;top:139.58px;width:0.69px;background:#ffffff"></i><i style="left:44.42px;top:139.58px;width:2.08px;background:#4ec9b0"></i><i style="left:46.50px;top:139.58px;width:1.39px;background:#ffffff"></i><i style="left:2.78px;top:140.96px;width:4.16px;background:#9cdcfe"></i><i style="left:6.94px;top:140.96px;width:0.69px;background:#ffffff"></i><i style="left:7.63px;top:140.96px;width:2.78px;background:#9cdcfe"></i><i style="left:10.41px;top:140.96px;width:0.69px;background:#ffffff"></i><i style="left:11.10px;top:140.96px;width:22.21px;background:#ce9178"></i><i style="left:33.31px;top:140.96px;width:0.69px;background:#ffffff"></i><i style="left:2.78px;top:142.35px;width:6.25px;background:#9cdcfe"></i><i style="left:9.72px;top:142.35px;width:0.69px;background:#ffffff"></i><i style="left:11.10px;top:142.35px;width:3.47px;background:#4ec9b0"></i><i style="left:14.57px;top:142.35px;width:0.69px;background:#ffffff"></i><i style="left:5.55px;top:143.73px;width:3.47px;background:#9cdcfe"></i><i style="left:9.02px;top:143.73px;width:0.69px;background:#ffffff"></i><i style="left:9.72px;top:143.73px;width:6.94px;background:#9cdcfe"></i><i style="left:16.66px;top:143.73px;width:2.08px;background:#ffffff"></i><i style="left:5.55px;top:145.11px;width:1.39px;background:#9cdcfe"></i><i style="left:6.94px;top:145.11px;width:0.69px;background:#ffffff"></i><i style="left:7.63px;top:145.11px;width:2.78px;background:#9cdcfe"></i><i style="left:10.41px;top:145.11px;width:0.69px;background:#ffffff"></i><i style="left:11.10px;top:145.11px;width:1.39px;background:#9cdcfe"></i><i style="left:12.49px;top:145.11px;width:0.69px;background:#ffffff"></i><i style="left:5.55px;top:146.49px;width:3.47px;background:#9cdcfe"></i><i style="left:9.02px;top:146.49px;width:1.39px;background:#ffffff"></i><i style="left:10.41px;top:146.49px;width:2.78px;background:#9cdcfe"></i><i style="left:13.19px;top:146.49px;width:0.69px;background:#ffffff"></i><i style="left:13.88px;top:146.49px;width:3.47px;background:#9cdcfe"></i><i style="left:17.35px;top:146.49px;width:0.69px;background:#ffffff"></i><i style="left:18.74px;top:146.49px;width:2.78px;background:#9cdcfe"></i><i style="left:21.51px;top:146.49px;width:0.69px;background:#ffffff"></i><i style="left:22.21px;top:146.49px;width:3.47px;background:#9cdcfe"></i><i style="left:25.68px;top:146.49px;width:1.39px;background:#ffffff"></i><i style="left:5.55px;top:147.87px;width:8.33px;background:#9cdcfe"></i><i style="left:13.88px;top:147.87px;width:0.69px;background:#ffffff"></i><i style="left:14.57px;top:147.87px;width:2.78px;background:#9cdcfe"></i><i style="left:17.35px;top:147.87px;width:0.69px;background:#ffffff"></i><i style="left:18.04px;top:147.87px;width:8.33px;background:#9cdcfe"></i><i style="left:26.37px;top:147.87px;width:0.69px;background:#ffffff"></i><i style="left:5.55px;top:149.26px;width:2.08px;background:#9cdcfe"></i><i style="left:7.63px;top:149.26px;width:0.69px;background:#ffffff"></i><i style="left:8.33px;top:149.26px;width:2.78px;background:#9cdcfe"></i><i style="left:11.10px;top:149.26px;width:0.69px;background:#ffffff"></i><i style="left:11.80px;top:149.26px;width:4.86px;background:#9cdcfe"></i><i style="left:16.66px;top:149.26px;width:0.69px;background:#ffffff"></i><i style="left:5.55px;top:150.64px;width:3.47px;background:#9cdcfe"></i><i style="left:9.02px;top:150.64px;width:0.69px;background:#ffffff"></i><i style="left:9.72px;top:150.64px;width:2.78px;background:#9cdcfe"></i><i style="left:12.49px;top:150.64px;width:0.69px;background:#ffffff"></i><i style="left:14.57px;top:150.64px;width:27.76px;background:#7ca668"></i><i style="left:2.78px;top:152.02px;width:0.69px;background:#ffffff"></i><i style="left:2.78px;top:154.78px;width:7.63px;background:#7ca668"></i><i style="left:2.78px;top:156.17px;width:3.47px;background:#9cdcfe"></i><i style="left:6.94px;top:156.17px;width:0.69px;background:#ffffff"></i><i style="left:8.33px;top:156.17px;width:7.63px;background:#9cdcfe"></i><i style="left:15.96px;top:156.17px;width:0.69px;background:#ffffff"></i><i style="left:16.66px;top:156.17px;width:2.78px;background:#9cdcfe"></i><i style="left:19.43px;top:156.17px;width:0.69px;background:#ffffff"></i><i style="left:20.82px;top:156.17px;width:4.86px;background:#9cdcfe"></i><i style="left:25.68px;top:156.17px;width:0.69px;background:#ffffff"></i><i style="left:2.78px;top:157.55px;width:6.25px;background:#9cdcfe"></i><i style="left:9.72px;top:157.55px;width:0.69px;background:#ffffff"></i><i style="left:11.10px;top:157.55px;width:8.33px;background:#4ec9b0"></i><i style="left:19.43px;top:157.55px;width:0.69px;background:#ffffff"></i><i style="left:20.13px;top:157.55px;width:5.55px;background:#9cdcfe"></i><i style="left:25.68px;top:157.55px;width:0.69px;background:#ffffff"></i><i style="left:5.55px;top:158.93px;width:6.25px;background:#9cdcfe"></i><i style="left:11.80px;top:158.93px;width:0.69px;background:#ffffff"></i><i style="left:13.19px;top:158.93px;width:3.47px;background:#9cdcfe"></i><i style="left:2.78px;top:160.31px;width:0.69px;background:#ffffff"></i><i style="left:4.86px;top:160.31px;width:28.45px;background:#7ca668"></i><i style="left:2.78px;top:163.08px;width:4.16px;background:#9cdcfe"></i><i style="left:6.94px;top:163.08px;width:0.69px;background:#ffffff"></i><i style="left:7.63px;top:163.08px;width:2.78px;background:#9cdcfe"></i><i style="left:10.41px;top:163.08px;width:0.69px;background:#ffffff"></i><i style="left:11.10px;top:163.08px;width:21.51px;background:#ce9178"></i><i style="left:32.62px;top:163.08px;width:0.69px;background:#ffffff"></i><i style="left:2.78px;top:164.46px;width:4.16px;background:#c586c0"></i><i style="left:7.63px;top:164.46px;width:6.25px;background:#9cdcfe"></i><i style="left:13.88px;top:164.46px;width:0.69px;background:#ffffff"></i><i style="left:15.27px;top:164.46px;width:6.25px;background:#9cdcfe"></i></div>
</div>
<div id="sl"></div>
<div class="hl" style="left:1765.500px;top:195.400px;width:13px;height:1.400px;background:#9cc6d8"></div>

<!-- status bar -->
<div class="hl" style="left:0;top:1131.600px;width:1778px;height:1.400px"></div>
<div id="st">
<svg viewBox="10 4 14 16" width="14" height="16" style="left:10px;top:4px;margin-top:0;color:#b8b8b8" fill="none" stroke="currentColor" stroke-width="1.500"><path d="M12.800 8.900L16.900 12.500 12.800 17.400M20.900 5.600L17.700 9.700 21.400 12.900"/></svg>
<svg viewBox="0 0 16 16" width="15" height="15" style="left:40.500px;top:2.500px;color:#fff" fill="none" stroke="currentColor"><circle cx="8" cy="8" r="6" stroke-width="1.100"/><path d="M5.500 5.500l5 5M10.500 5.500l-5 5" stroke-width="1.100"/></svg>
<span class="it" style="left:60px">1</span>
<svg viewBox="0 0 16 16" width="15" height="15" style="left:69px;top:2.500px;color:#fff" fill="none" stroke="currentColor"><path d="M8 2.200L14.300 13.500H1.700z" stroke-width="1.100" stroke-linejoin="round"/><path d="M8 6.500v3.500M8 11v1.200" stroke-width="1.100"/></svg>
<span class="it" style="left:88.500px">1</span>
<svg viewBox="0 0 16 16" width="15" height="15" style="left:110px;top:2.500px;color:#fff" fill="none" stroke="currentColor"><path d="M8 6.500l-3 8M8 6.500l3 8M6 11.500h4M5.300 4a3.500 3.500 0 000 5M10.700 4a3.500 3.500 0 010 5M3.500 2.500a5.500 5.500 0 000 8M12.500 2.500a5.500 5.500 0 010 8" stroke-width="1"/><circle cx="8" cy="6.500" r=".9" fill="currentColor" stroke="none"/></svg>
<span class="it" style="left:129px">0</span>
<svg viewBox="0 0 16 16" width="14" height="14" style="left:1321.500px;top:3px;color:#fff" fill="none" stroke="currentColor"><circle cx="7" cy="7" r="4.500" stroke-width="1.100"/><path d="M10.300 10.300L14 14M5 7h4M7 5v4" stroke-width="1.100"/></svg>
<span class="it" style="left:1354.500px"><span style="letter-spacing:0.299px;">Ln 12, Col 1</span></span>
<span class="it" style="left:1439.500px"><span style="letter-spacing:0.279px;">Spaces: 4</span></span>
<span class="it" style="left:1511.500px"><span style="letter-spacing:0.362px;">UTF-8</span></span>
<span class="it" style="left:1564px"><span style="letter-spacing:-0.293px;">LF</span></span>
<span class="it" style="left:1592.500px;font-size:11px"><span>{ }</span></span>
<span class="it" style="left:1611.500px"><span style="letter-spacing:0.392px;">Python</span></span>
<span class="it" style="left:1666.500px"><span style="letter-spacing:0.688px;">3.9.6 64-bit</span></span>
<svg viewBox="0 0 16 16" width="15" height="15" style="left:1749.500px;top:2.500px;color:#fff" fill="none" stroke="currentColor"><path d="M8 2.200c-2.500 0-4 1.800-4 4v3.300L2.800 11.500v.5h10.400v-.5L12 9.500V6.200c0-2.200-1.500-4-4-4zM6.500 12.500a1.500 1.500 0 003 0" stroke-width="1.100" stroke-linejoin="round"/></svg>
</div>

</div></div>

<!-- click marker -->
<svg id="marker" viewBox="0 0 40 40" width="40" height="40">
<circle cx="20.300" cy="20" r="14" fill="#ffadad" stroke="#ff0a0a" stroke-width="1.800"/>
<circle cx="20.200" cy="20.300" r="2" fill="none" stroke="#e02020" stroke-width="1"/>
<path d="M10 20.400h19M20.150 10.700v19.200" stroke="#9a9a9a" stroke-width="2"/>
<path d="M10 20.400h19M20.150 10.700v19.200" stroke="#fff" stroke-width="1.100"/>
<rect x="8.800" y="16.700" width="21.600" height="8" fill="none" stroke="#00e658" stroke-width="2.200" stroke-linejoin="round"/>
</svg>
<div id="clickpos">Click Position: (714, 800)</div>

</body></html>
